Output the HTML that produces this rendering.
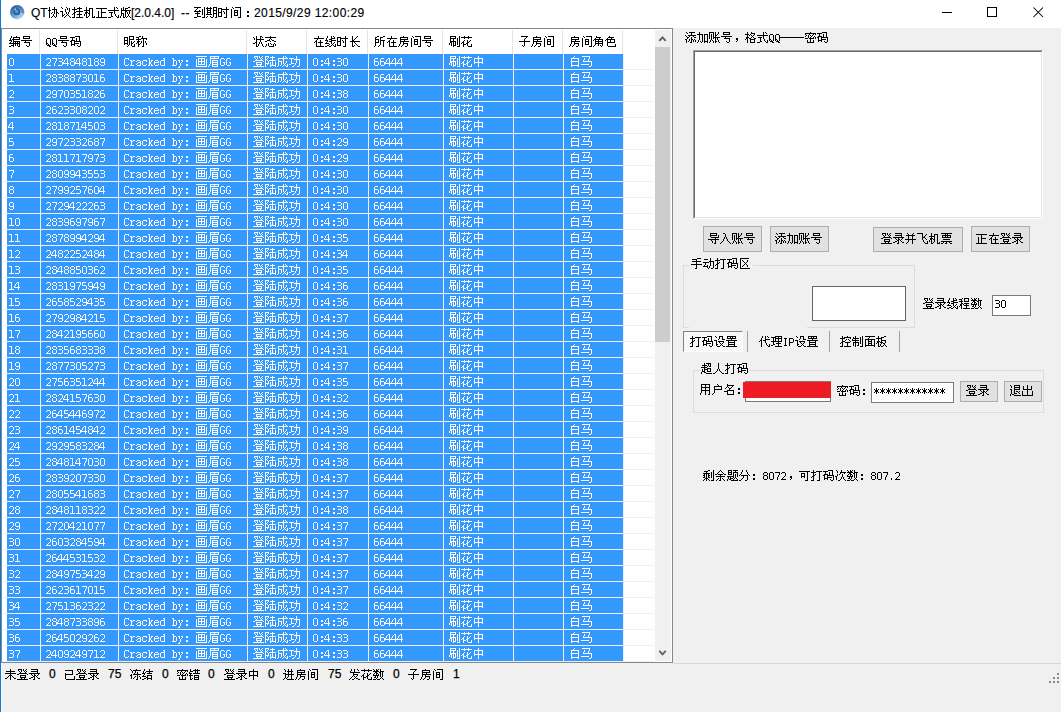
<!DOCTYPE html><html><head><meta charset="utf-8"><style>
*{margin:0;padding:0;box-sizing:border-box}
html,body{width:1061px;height:712px;overflow:hidden;background:#f0f0f0}
body{position:relative;font-family:"Liberation Sans",sans-serif;font-size:12px;color:#000}
div,span,svg{position:absolute;display:block}
span{white-space:nowrap;line-height:14px}
</style></head><body>
<div style="left:0;top:0;width:1061px;height:28px;background:#fff"></div>
<div style="left:0;top:0;width:1px;height:712px;background:#0a7ad6"></div>
<div style="left:1px;top:28px;width:1px;height:684px;background:#fdf8f2"></div>
<svg style="left:10px;top:5px" width="15" height="15" viewBox="0 0 15 15"><defs><linearGradient id="ig" x1="0.2" y1="0.1" x2="0.8" y2="0.95"><stop offset="0" stop-color="#2a5fa6"/><stop offset="0.55" stop-color="#6b9fd0"/><stop offset="1" stop-color="#cfe0f0"/></linearGradient><radialGradient id="ip" cx="0.45" cy="0.4" r="0.6"><stop offset="0" stop-color="#5ab4ee"/><stop offset="1" stop-color="#0d5ea6"/></radialGradient></defs><circle cx="7.2" cy="7.2" r="7.2" fill="url(#ig)"/><path d="M7.2 2.5A4.7 4.7 0 0 1 12 7.5L14 9A7 7 0 0 0 7.5 0.5Z" fill="#3a70b8" opacity="0.6"/><circle cx="6.8" cy="6.8" r="2.9" fill="url(#ip)" stroke="#15365e" stroke-width="0.6"/><path d="M4.2 5.2A3 3 0 0 1 6 3.9" stroke="#fff" stroke-width="0.9" fill="none"/></svg>
<span style="left:31px;top:5px;line-height:16px;-webkit-text-stroke:0.15px #000">QT</span>
<span style="left:131px;top:5px;line-height:16px;-webkit-text-stroke:0.15px #000">[2.0.4.0]</span>
<span style="left:181px;top:5px;line-height:16px;-webkit-text-stroke:0.15px #000;letter-spacing:0.6px">--</span>
<span style="left:254px;top:5px;line-height:16px;-webkit-text-stroke:0.15px #000;letter-spacing:0.4px">2015/9/29 12:00:29</span>
<div style="left:942px;top:12px;width:10px;height:1px;background:#000"></div>
<div style="left:987px;top:7px;width:10px;height:10px;border:1px solid #000"></div>
<svg style="left:1033px;top:7px" width="11" height="11" viewBox="0 0 11 11"><path d="M0.5 0.5L10 10M10 0.5L0.5 10" stroke="#000" stroke-width="1.05"/></svg>
<div style="left:1px;top:28px;width:672px;height:635px;background:#fff;border:1px solid #828790"></div>
<div style="left:39px;top:30px;width:1px;height:24px;background:#e5e5e5"></div>
<div style="left:117px;top:30px;width:1px;height:24px;background:#e5e5e5"></div>
<div style="left:246px;top:30px;width:1px;height:24px;background:#e5e5e5"></div>
<div style="left:306px;top:30px;width:1px;height:24px;background:#e5e5e5"></div>
<div style="left:367px;top:30px;width:1px;height:24px;background:#e5e5e5"></div>
<div style="left:442px;top:30px;width:1px;height:24px;background:#e5e5e5"></div>
<div style="left:512px;top:30px;width:1px;height:24px;background:#e5e5e5"></div>
<div style="left:562px;top:30px;width:1px;height:24px;background:#e5e5e5"></div>
<div style="left:622px;top:30px;width:1px;height:24px;background:#e5e5e5"></div>
<div style="left:7px;top:54px;width:616px;height:607px;background:#3399ff"></div>
<div style="left:3px;top:54px;width:651px;height:608px;background:repeating-linear-gradient(to bottom,transparent 0,transparent 15px,#f0f0f0 15px,#f0f0f0 16px)"></div>
<div style="left:40px;top:54px;width:1px;height:608px;background:#f0f0f0"></div>
<div style="left:118px;top:54px;width:1px;height:608px;background:#f0f0f0"></div>
<div style="left:247px;top:54px;width:1px;height:608px;background:#f0f0f0"></div>
<div style="left:307px;top:54px;width:1px;height:608px;background:#f0f0f0"></div>
<div style="left:368px;top:54px;width:1px;height:608px;background:#f0f0f0"></div>
<div style="left:443px;top:54px;width:1px;height:608px;background:#f0f0f0"></div>
<div style="left:513px;top:54px;width:1px;height:608px;background:#f0f0f0"></div>
<div style="left:563px;top:54px;width:1px;height:608px;background:#f0f0f0"></div>
<div style="left:623px;top:54px;width:1px;height:608px;background:#f0f0f0"></div>
<div style="left:655px;top:30px;width:16px;height:631px;background:#f0f0f0"></div>
<div style="left:655px;top:47px;width:15px;height:295px;background:#cdcdcd"></div>
<svg style="left:658px;top:35px" width="10" height="8" viewBox="0 0 10 8"><path d="M1.3 5.8L4.5 2.4L7.7 5.8" fill="none" stroke="#606060" stroke-width="1.9"/></svg>
<svg style="left:658px;top:648px" width="10" height="8" viewBox="0 0 10 8"><path d="M1.3 2.9L4.5 6.3L7.7 2.9" fill="none" stroke="#606060" stroke-width="1.9"/></svg>
<div style="left:673px;top:663px;width:388px;height:1px;background:#d7d7d7"></div>
<span style="left:49px;top:667px;-webkit-text-stroke:0.25px #000">0</span>
<span style="left:108px;top:667px;-webkit-text-stroke:0.25px #000">75</span>
<span style="left:162px;top:667px;-webkit-text-stroke:0.25px #000">0</span>
<span style="left:208px;top:667px;-webkit-text-stroke:0.25px #000">0</span>
<span style="left:268px;top:667px;-webkit-text-stroke:0.25px #000">0</span>
<span style="left:328px;top:667px;-webkit-text-stroke:0.25px #000">75</span>
<span style="left:393px;top:667px;-webkit-text-stroke:0.25px #000">0</span>
<span style="left:453px;top:667px;-webkit-text-stroke:0.25px #000">1</span>
<div style="left:1057px;top:673px;width:2px;height:2px;background:#8a8a8a"></div>
<div style="left:1053px;top:677px;width:2px;height:2px;background:#8a8a8a"></div>
<div style="left:1057px;top:677px;width:2px;height:2px;background:#8a8a8a"></div>
<div style="left:1049px;top:681px;width:2px;height:2px;background:#8a8a8a"></div>
<div style="left:1053px;top:681px;width:2px;height:2px;background:#8a8a8a"></div>
<div style="left:1057px;top:681px;width:2px;height:2px;background:#8a8a8a"></div>
<div style="left:693px;top:50px;width:350px;height:169px;background:#fff;border-style:solid;border-width:1px;border-color:#a0a0a0 #fff #fff #a0a0a0"></div>
<div style="left:694px;top:51px;width:348px;height:167px;border-style:solid;border-width:1px;border-color:#696969 #e3e3e3 #e3e3e3 #696969"></div>
<div style="left:703px;top:226px;width:59px;height:26px;background:#e1e1e1;border:1px solid #adadad"></div>
<div style="left:770px;top:226px;width:59px;height:26px;background:#e1e1e1;border:1px solid #adadad"></div>
<div style="left:873px;top:227px;width:90px;height:25px;background:#e1e1e1;border:1px solid #adadad"></div>
<div style="left:971px;top:226px;width:59px;height:26px;background:#e1e1e1;border:1px solid #adadad"></div>
<div style="left:683px;top:265px;width:232px;height:63px;border:1px solid #dcdcdc"></div>
<div style="left:689px;top:327px;width:118px;height:1px;background:#f0f0f0"></div>
<div style="left:689px;top:258px;width:64px;height:12px;background:#f0f0f0"></div>
<div style="left:812px;top:286px;width:94px;height:35px;background:#fff;border:1px solid #646464"></div>
<div style="left:992px;top:295px;width:39px;height:21px;background:#fff;border:1px solid #7a7a7a"></div>
<div style="left:683px;top:331px;width:60px;height:21px;border-style:solid;border-width:1px;border-color:#808080 #fff #fff #808080;background:#f7f7f7"></div>
<div style="left:747px;top:331px;width:1px;height:21px;background:#a0a0a0"></div>
<div style="left:829px;top:331px;width:1px;height:21px;background:#a0a0a0"></div>
<div style="left:899px;top:331px;width:1px;height:21px;background:#a0a0a0"></div>
<div style="left:693px;top:370px;width:351px;height:43px;border:1px solid #dcdcdc"></div>
<div style="left:700px;top:363px;width:50px;height:12px;background:#f0f0f0"></div>
<div style="left:745px;top:381px;width:86px;height:21px;background:#fff;border:1px solid #7a7a7a"></div>
<div style="left:743px;top:382px;width:88px;height:16px;background:#ed1c24"></div>
<div style="left:871px;top:382px;width:83px;height:21px;background:#fff;border:1px solid #7a7a7a"></div>
<div style="left:960px;top:381px;width:38px;height:21px;background:#e1e1e1;border:1px solid #adadad"></div>
<div style="left:1004px;top:381px;width:38px;height:21px;background:#e1e1e1;border:1px solid #adadad"></div>
<svg style="position:absolute;left:0;top:0" width="1061" height="712" viewBox="0 0 1061 712" shape-rendering="crispEdges"><defs><path id="g0" d="M1 -10h1v1h-1zM6 -10h1v1h-1zM1 -9h1v1h-1zM6 -9h1v1h-1zM1 -8h1v1h-1zM4 -8h5v1h-5zM0 -7h3v1h-3zM6 -7h1v1h-1zM8 -7h1v1h-1zM1 -6h1v1h-1zM6 -6h1v1h-1zM8 -6h1v1h-1zM1 -5h1v1h-1zM4 -5h1v1h-1zM6 -5h1v1h-1zM8 -5h2v1h-2zM1 -4h1v1h-1zM3 -4h1v1h-1zM6 -4h1v1h-1zM8 -4h1v1h-1zM10 -4h1v1h-1zM1 -3h1v1h-1zM5 -3h1v1h-1zM8 -3h1v1h-1zM1 -2h1v1h-1zM5 -2h1v1h-1zM8 -2h1v1h-1zM1 -1h1v1h-1zM4 -1h1v1h-1zM6 -1h1v1h-1zM8 -1h1v1h-1zM1 0h1v1h-1zM3 0h1v1h-1zM7 0h1v1h-1z"/><path id="g1" d="M1 -10h1v1h-1zM6 -10h1v1h-1zM2 -9h1v1h-1zM7 -9h1v1h-1zM9 -9h1v1h-1zM5 -8h1v1h-1zM7 -8h1v1h-1zM9 -8h1v1h-1zM5 -7h1v1h-1zM9 -7h1v1h-1zM0 -6h3v1h-3zM5 -6h1v1h-1zM9 -6h1v1h-1zM2 -5h1v1h-1zM6 -5h1v1h-1zM8 -5h1v1h-1zM2 -4h1v1h-1zM6 -4h1v1h-1zM8 -4h1v1h-1zM2 -3h1v1h-1zM4 -3h1v1h-1zM7 -3h1v1h-1zM2 -2h2v1h-2zM6 -2h1v1h-1zM8 -2h1v1h-1zM2 -1h1v1h-1zM5 -1h1v1h-1zM9 -1h1v1h-1zM4 0h1v1h-1zM10 0h1v1h-1z"/><path id="g2" d="M2 -10h1v1h-1zM7 -10h1v1h-1zM2 -9h1v1h-1zM5 -9h5v1h-5zM0 -8h5v1h-5zM7 -8h1v1h-1zM2 -7h1v1h-1zM7 -7h1v1h-1zM2 -6h1v1h-1zM4 -6h7v1h-7zM2 -5h2v1h-2zM7 -5h1v1h-1zM1 -4h2v1h-2zM7 -4h1v1h-1zM0 -3h1v1h-1zM2 -3h1v1h-1zM5 -3h5v1h-5zM2 -2h1v1h-1zM7 -2h1v1h-1zM2 -1h1v1h-1zM7 -1h1v1h-1zM0 0h3v1h-3zM4 0h7v1h-7z"/><path id="g3" d="M2 -10h1v1h-1zM2 -9h1v1h-1zM5 -9h4v1h-4zM2 -8h1v1h-1zM5 -8h1v1h-1zM8 -8h1v1h-1zM0 -7h6v1h-6zM8 -7h1v1h-1zM2 -6h1v1h-1zM5 -6h1v1h-1zM8 -6h1v1h-1zM1 -5h3v1h-3zM5 -5h1v1h-1zM8 -5h1v1h-1zM1 -4h2v1h-2zM4 -4h2v1h-2zM8 -4h1v1h-1zM0 -3h1v1h-1zM2 -3h1v1h-1zM5 -3h1v1h-1zM8 -3h1v1h-1zM0 -2h1v1h-1zM2 -2h1v1h-1zM5 -2h1v1h-1zM8 -2h1v1h-1zM2 -1h1v1h-1zM4 -1h1v1h-1zM8 -1h1v1h-1zM10 -1h1v1h-1zM2 0h2v1h-2zM8 0h3v1h-3z"/><path id="g4" d="M0 -9h11v1h-11zM5 -8h1v1h-1zM5 -7h1v1h-1zM2 -6h1v1h-1zM5 -6h1v1h-1zM2 -5h1v1h-1zM5 -5h5v1h-5zM2 -4h1v1h-1zM5 -4h1v1h-1zM2 -3h1v1h-1zM5 -3h1v1h-1zM2 -2h1v1h-1zM5 -2h1v1h-1zM2 -1h1v1h-1zM5 -1h1v1h-1zM0 0h11v1h-11z"/><path id="g5" d="M6 -10h1v1h-1zM8 -10h1v1h-1zM6 -9h1v1h-1zM9 -9h1v1h-1zM6 -8h1v1h-1zM0 -7h11v1h-11zM6 -6h1v1h-1zM1 -5h4v1h-4zM6 -5h1v1h-1zM3 -4h1v1h-1zM6 -4h1v1h-1zM3 -3h1v1h-1zM7 -3h1v1h-1zM3 -2h1v1h-1zM7 -2h1v1h-1zM10 -2h1v1h-1zM3 -1h2v1h-2zM8 -1h1v1h-1zM10 -1h1v1h-1zM0 0h3v1h-3zM9 0h2v1h-2z"/><path id="g6" d="M3 -10h1v1h-1zM8 -10h2v1h-2zM1 -9h1v1h-1zM3 -9h1v1h-1zM5 -9h3v1h-3zM1 -8h1v1h-1zM3 -8h1v1h-1zM5 -8h1v1h-1zM1 -7h10v1h-10zM1 -6h1v1h-1zM5 -6h2v1h-2zM9 -6h1v1h-1zM1 -5h1v1h-1zM5 -5h1v1h-1zM7 -5h1v1h-1zM9 -5h1v1h-1zM1 -4h3v1h-3zM5 -4h1v1h-1zM7 -4h1v1h-1zM9 -4h1v1h-1zM1 -3h1v1h-1zM3 -3h1v1h-1zM5 -3h1v1h-1zM8 -3h1v1h-1zM1 -2h1v1h-1zM3 -2h1v1h-1zM5 -2h1v1h-1zM8 -2h1v1h-1zM0 -1h1v1h-1zM3 -1h1v1h-1zM5 -1h1v1h-1zM7 -1h1v1h-1zM9 -1h1v1h-1zM0 0h1v1h-1zM3 0h2v1h-2zM6 0h1v1h-1zM10 0h1v1h-1z"/><path id="g7" d="M0 -10h7v1h-7zM10 -10h1v1h-1zM3 -9h1v1h-1zM10 -9h1v1h-1zM2 -8h1v1h-1zM8 -8h1v1h-1zM10 -8h1v1h-1zM1 -7h1v1h-1zM5 -7h1v1h-1zM8 -7h1v1h-1zM10 -7h1v1h-1zM0 -6h7v1h-7zM8 -6h1v1h-1zM10 -6h1v1h-1zM3 -5h1v1h-1zM8 -5h1v1h-1zM10 -5h1v1h-1zM1 -4h5v1h-5zM8 -4h1v1h-1zM10 -4h1v1h-1zM3 -3h1v1h-1zM8 -3h1v1h-1zM10 -3h1v1h-1zM3 -2h1v1h-1zM10 -2h1v1h-1zM3 -1h4v1h-4zM10 -1h1v1h-1zM0 0h3v1h-3zM8 0h3v1h-3z"/><path id="g8" d="M1 -10h1v1h-1zM4 -10h1v1h-1zM7 -10h4v1h-4zM0 -9h6v1h-6zM7 -9h1v1h-1zM10 -9h1v1h-1zM1 -8h1v1h-1zM4 -8h1v1h-1zM7 -8h1v1h-1zM10 -8h1v1h-1zM1 -7h4v1h-4zM7 -7h4v1h-4zM1 -6h1v1h-1zM4 -6h1v1h-1zM7 -6h1v1h-1zM10 -6h1v1h-1zM1 -5h4v1h-4zM7 -5h1v1h-1zM10 -5h1v1h-1zM1 -4h1v1h-1zM4 -4h1v1h-1zM7 -4h4v1h-4zM0 -3h6v1h-6zM7 -3h1v1h-1zM10 -3h1v1h-1zM7 -2h1v1h-1zM10 -2h1v1h-1zM1 -1h1v1h-1zM4 -1h1v1h-1zM7 -1h1v1h-1zM10 -1h1v1h-1zM0 0h1v1h-1zM5 0h2v1h-2zM9 0h2v1h-2z"/><path id="g9" d="M8 -10h1v1h-1zM0 -9h4v1h-4zM8 -9h1v1h-1zM0 -8h1v1h-1zM3 -8h8v1h-8zM0 -7h1v1h-1zM3 -7h1v1h-1zM8 -7h1v1h-1zM0 -6h1v1h-1zM3 -6h1v1h-1zM5 -6h1v1h-1zM8 -6h1v1h-1zM0 -5h4v1h-4zM6 -5h1v1h-1zM8 -5h1v1h-1zM0 -4h1v1h-1zM3 -4h1v1h-1zM6 -4h1v1h-1zM8 -4h1v1h-1zM0 -3h1v1h-1zM3 -3h1v1h-1zM8 -3h1v1h-1zM0 -2h1v1h-1zM3 -2h1v1h-1zM8 -2h1v1h-1zM0 -1h4v1h-4zM8 -1h1v1h-1zM6 0h3v1h-3z"/><path id="g10" d="M2 -10h1v1h-1zM5 -10h6v1h-6zM3 -9h1v1h-1zM10 -9h1v1h-1zM1 -8h1v1h-1zM10 -8h1v1h-1zM1 -7h1v1h-1zM4 -7h4v1h-4zM10 -7h1v1h-1zM1 -6h1v1h-1zM4 -6h1v1h-1zM7 -6h1v1h-1zM10 -6h1v1h-1zM1 -5h1v1h-1zM4 -5h4v1h-4zM10 -5h1v1h-1zM1 -4h1v1h-1zM4 -4h1v1h-1zM7 -4h1v1h-1zM10 -4h1v1h-1zM1 -3h1v1h-1zM4 -3h1v1h-1zM7 -3h1v1h-1zM10 -3h1v1h-1zM1 -2h1v1h-1zM4 -2h4v1h-4zM10 -2h1v1h-1zM1 -1h1v1h-1zM10 -1h1v1h-1zM1 0h1v1h-1zM8 0h3v1h-3z"/><path id="g11" d="M2 -6h2v1h-2zM2 -5h2v1h-2zM2 -2h2v1h-2zM2 -1h2v1h-2z"/><path id="g12" d="M3 -10h1v1h-1zM8 -10h1v1h-1zM3 -9h1v1h-1zM5 -9h7v1h-7zM2 -8h1v1h-1zM5 -8h1v1h-1zM11 -8h1v1h-1zM2 -7h1v1h-1zM4 -7h8v1h-8zM1 -6h3v1h-3zM5 -6h1v1h-1zM3 -5h1v1h-1zM5 -5h7v1h-7zM2 -4h1v1h-1zM5 -4h1v1h-1zM7 -4h1v1h-1zM9 -4h1v1h-1zM11 -4h1v1h-1zM1 -3h11v1h-11zM5 -2h1v1h-1zM7 -2h1v1h-1zM9 -2h1v1h-1zM11 -2h1v1h-1zM3 -1h3v1h-3zM7 -1h1v1h-1zM9 -1h1v1h-1zM11 -1h1v1h-1zM1 0h2v1h-2zM5 0h1v1h-1zM10 0h2v1h-2z"/><path id="g13" d="M3 -10h7v1h-7zM3 -9h1v1h-1zM9 -9h1v1h-1zM3 -8h7v1h-7zM1 -6h11v1h-11zM5 -5h1v1h-1zM4 -4h6v1h-6zM9 -3h1v1h-1zM9 -2h1v1h-1zM6 -1h1v1h-1zM9 -1h1v1h-1zM7 0h2v1h-2z"/><path id="g14" d="M2 -8h3v1h-3zM1 -7h1v1h-1zM5 -7h1v1h-1zM1 -6h1v1h-1zM5 -6h1v1h-1zM1 -5h1v1h-1zM5 -5h1v1h-1zM1 -4h1v1h-1zM5 -4h1v1h-1zM1 -3h2v1h-2zM5 -3h1v1h-1zM1 -2h1v1h-1zM3 -2h1v1h-1zM5 -2h1v1h-1zM2 -1h3v1h-3zM4 0h2v1h-2z"/><path id="g15" d="M6 -10h5v1h-5zM1 -9h5v1h-5zM10 -9h1v1h-1zM3 -8h1v1h-1zM7 -8h1v1h-1zM10 -8h1v1h-1zM3 -7h1v1h-1zM7 -7h1v1h-1zM10 -7h1v1h-1zM2 -6h4v1h-4zM7 -6h1v1h-1zM10 -6h1v1h-1zM1 -5h2v1h-2zM5 -5h7v1h-7zM2 -4h1v1h-1zM5 -4h1v1h-1zM11 -4h1v1h-1zM2 -3h1v1h-1zM5 -3h5v1h-5zM11 -3h1v1h-1zM2 -2h4v1h-4zM11 -2h1v1h-1zM2 -1h1v1h-1zM5 -1h1v1h-1zM8 -1h1v1h-1zM11 -1h1v1h-1zM9 0h2v1h-2z"/><path id="g16" d="M6 -10h5v1h-5zM1 -9h4v1h-4zM6 -9h1v1h-1zM10 -9h1v1h-1zM1 -8h1v1h-1zM4 -8h1v1h-1zM6 -8h1v1h-1zM10 -8h1v1h-1zM1 -7h1v1h-1zM4 -7h1v1h-1zM6 -7h5v1h-5zM1 -6h4v1h-4zM6 -6h1v1h-1zM1 -5h1v1h-1zM4 -5h1v1h-1zM6 -5h1v1h-1zM8 -5h1v1h-1zM11 -5h1v1h-1zM1 -4h1v1h-1zM4 -4h1v1h-1zM6 -4h1v1h-1zM8 -4h1v1h-1zM10 -4h1v1h-1zM1 -3h4v1h-4zM6 -3h1v1h-1zM8 -3h2v1h-2zM1 -2h1v1h-1zM4 -2h1v1h-1zM6 -2h1v1h-1zM8 -2h1v1h-1zM11 -2h1v1h-1zM5 -1h1v1h-1zM8 -1h1v1h-1zM11 -1h1v1h-1zM4 0h1v1h-1zM9 0h3v1h-3z"/><path id="g17" d="M4 -10h2v1h-2zM7 -10h1v1h-1zM1 -9h3v1h-3zM7 -9h1v1h-1zM3 -8h1v1h-1zM6 -8h6v1h-6zM1 -7h5v1h-5zM8 -7h1v1h-1zM11 -7h1v1h-1zM3 -6h1v1h-1zM8 -6h1v1h-1zM2 -5h3v1h-3zM6 -5h1v1h-1zM8 -5h1v1h-1zM10 -5h1v1h-1zM2 -4h2v1h-2zM6 -4h1v1h-1zM8 -4h1v1h-1zM10 -4h1v1h-1zM1 -3h1v1h-1zM3 -3h1v1h-1zM5 -3h1v1h-1zM8 -3h1v1h-1zM11 -3h1v1h-1zM3 -2h2v1h-2zM8 -2h1v1h-1zM11 -2h1v1h-1zM3 -1h1v1h-1zM8 -1h1v1h-1zM3 0h1v1h-1zM7 0h2v1h-2z"/><path id="g18" d="M4 -10h1v1h-1zM8 -10h2v1h-2zM1 -9h1v1h-1zM4 -9h1v1h-1zM8 -9h1v1h-1zM10 -9h1v1h-1zM2 -8h1v1h-1zM4 -8h1v1h-1zM8 -8h1v1h-1zM2 -7h1v1h-1zM4 -7h8v1h-8zM4 -6h1v1h-1zM8 -6h1v1h-1zM4 -5h1v1h-1zM8 -5h1v1h-1zM3 -4h2v1h-2zM7 -4h1v1h-1zM9 -4h1v1h-1zM1 -3h2v1h-2zM4 -3h1v1h-1zM7 -3h1v1h-1zM9 -3h1v1h-1zM4 -2h1v1h-1zM6 -2h1v1h-1zM10 -2h1v1h-1zM4 -1h1v1h-1zM6 -1h1v1h-1zM10 -1h1v1h-1zM4 0h2v1h-2zM11 0h1v1h-1z"/><path id="g19" d="M6 -10h1v1h-1zM1 -9h11v1h-11zM6 -8h1v1h-1zM5 -7h1v1h-1zM7 -7h1v1h-1zM3 -6h3v1h-3zM8 -6h2v1h-2zM1 -5h2v1h-2zM6 -5h1v1h-1zM10 -5h2v1h-2zM4 -3h1v1h-1zM6 -3h1v1h-1zM10 -3h1v1h-1zM2 -2h1v1h-1zM4 -2h1v1h-1zM7 -2h1v1h-1zM9 -2h1v1h-1zM11 -2h1v1h-1zM2 -1h1v1h-1zM4 -1h1v1h-1zM9 -1h1v1h-1zM11 -1h1v1h-1zM1 0h1v1h-1zM5 0h5v1h-5z"/><path id="g20" d="M6 -10h1v1h-1zM6 -9h1v1h-1zM2 -8h10v1h-10zM5 -7h1v1h-1zM4 -6h1v1h-1zM8 -6h1v1h-1zM3 -5h2v1h-2zM8 -5h1v1h-1zM2 -4h1v1h-1zM4 -4h1v1h-1zM6 -4h5v1h-5zM4 -3h1v1h-1zM8 -3h1v1h-1zM4 -2h1v1h-1zM8 -2h1v1h-1zM4 -1h1v1h-1zM8 -1h1v1h-1zM4 0h8v1h-8z"/><path id="g21" d="M3 -10h1v1h-1zM7 -10h1v1h-1zM9 -10h1v1h-1zM3 -9h1v1h-1zM7 -9h1v1h-1zM10 -9h1v1h-1zM2 -8h1v1h-1zM7 -8h4v1h-4zM2 -7h1v1h-1zM5 -7h3v1h-3zM1 -6h3v1h-3zM7 -6h5v1h-5zM3 -5h1v1h-1zM5 -5h3v1h-3zM2 -4h1v1h-1zM7 -4h1v1h-1zM10 -4h1v1h-1zM1 -3h4v1h-4zM7 -3h1v1h-1zM9 -3h1v1h-1zM5 -2h1v1h-1zM8 -2h1v1h-1zM11 -2h1v1h-1zM3 -1h2v1h-2zM7 -1h1v1h-1zM9 -1h1v1h-1zM11 -1h1v1h-1zM1 0h2v1h-2zM5 0h2v1h-2zM10 0h2v1h-2z"/><path id="g22" d="M9 -10h1v1h-1zM1 -9h4v1h-4zM9 -9h1v1h-1zM1 -8h1v1h-1zM4 -8h8v1h-8zM1 -7h1v1h-1zM4 -7h1v1h-1zM9 -7h1v1h-1zM1 -6h1v1h-1zM4 -6h1v1h-1zM6 -6h1v1h-1zM9 -6h1v1h-1zM1 -5h4v1h-4zM7 -5h1v1h-1zM9 -5h1v1h-1zM1 -4h1v1h-1zM4 -4h1v1h-1zM7 -4h1v1h-1zM9 -4h1v1h-1zM1 -3h1v1h-1zM4 -3h1v1h-1zM9 -3h1v1h-1zM1 -2h1v1h-1zM4 -2h1v1h-1zM9 -2h1v1h-1zM1 -1h4v1h-4zM9 -1h1v1h-1zM7 0h3v1h-3z"/><path id="g23" d="M4 -10h1v1h-1zM9 -10h1v1h-1zM4 -9h1v1h-1zM8 -9h1v1h-1zM4 -8h1v1h-1zM7 -8h1v1h-1zM4 -7h1v1h-1zM6 -7h1v1h-1zM4 -6h2v1h-2zM2 -5h10v1h-10zM4 -4h1v1h-1zM6 -4h1v1h-1zM4 -3h1v1h-1zM7 -3h1v1h-1zM4 -2h1v1h-1zM8 -2h1v1h-1zM4 -1h1v1h-1zM6 -1h1v1h-1zM9 -1h1v1h-1zM4 0h2v1h-2zM10 0h2v1h-2z"/><path id="g24" d="M4 -10h2v1h-2zM10 -10h2v1h-2zM2 -9h2v1h-2zM7 -9h3v1h-3zM2 -8h1v1h-1zM7 -8h1v1h-1zM2 -7h4v1h-4zM7 -7h1v1h-1zM2 -6h1v1h-1zM5 -6h1v1h-1zM7 -6h5v1h-5zM2 -5h1v1h-1zM5 -5h1v1h-1zM7 -5h1v1h-1zM10 -5h1v1h-1zM2 -4h4v1h-4zM7 -4h1v1h-1zM10 -4h1v1h-1zM2 -3h1v1h-1zM7 -3h1v1h-1zM10 -3h1v1h-1zM2 -2h1v1h-1zM7 -2h1v1h-1zM10 -2h1v1h-1zM2 -1h1v1h-1zM6 -1h1v1h-1zM10 -1h1v1h-1zM1 0h1v1h-1zM5 0h1v1h-1zM10 0h1v1h-1z"/><path id="g25" d="M6 -10h1v1h-1zM3 -9h8v1h-8zM3 -8h1v1h-1zM10 -8h1v1h-1zM3 -7h8v1h-8zM3 -6h1v1h-1zM7 -6h1v1h-1zM3 -5h9v1h-9zM3 -4h1v1h-1zM6 -4h1v1h-1zM3 -3h1v1h-1zM6 -3h5v1h-5zM2 -2h1v1h-1zM6 -2h1v1h-1zM10 -2h1v1h-1zM2 -1h1v1h-1zM5 -1h1v1h-1zM10 -1h1v1h-1zM1 0h1v1h-1zM4 0h1v1h-1zM8 0h2v1h-2z"/><path id="g26" d="M3 -10h1v1h-1zM6 -10h6v1h-6zM4 -9h1v1h-1zM11 -9h1v1h-1zM2 -8h1v1h-1zM11 -8h1v1h-1zM2 -7h1v1h-1zM5 -7h4v1h-4zM11 -7h1v1h-1zM2 -6h1v1h-1zM5 -6h1v1h-1zM8 -6h1v1h-1zM11 -6h1v1h-1zM2 -5h1v1h-1zM5 -5h4v1h-4zM11 -5h1v1h-1zM2 -4h1v1h-1zM5 -4h1v1h-1zM8 -4h1v1h-1zM11 -4h1v1h-1zM2 -3h1v1h-1zM5 -3h1v1h-1zM8 -3h1v1h-1zM11 -3h1v1h-1zM2 -2h1v1h-1zM5 -2h4v1h-4zM11 -2h1v1h-1zM2 -1h1v1h-1zM11 -1h1v1h-1zM2 0h1v1h-1zM9 0h3v1h-3z"/><path id="g27" d="M2 -10h6v1h-6zM11 -10h1v1h-1zM2 -9h1v1h-1zM7 -9h1v1h-1zM11 -9h1v1h-1zM2 -8h6v1h-6zM9 -8h1v1h-1zM11 -8h1v1h-1zM2 -7h1v1h-1zM5 -7h1v1h-1zM9 -7h1v1h-1zM11 -7h1v1h-1zM2 -6h1v1h-1zM5 -6h1v1h-1zM9 -6h1v1h-1zM11 -6h1v1h-1zM2 -5h6v1h-6zM9 -5h1v1h-1zM11 -5h1v1h-1zM2 -4h2v1h-2zM5 -4h1v1h-1zM7 -4h1v1h-1zM9 -4h1v1h-1zM11 -4h1v1h-1zM1 -3h1v1h-1zM3 -3h1v1h-1zM5 -3h1v1h-1zM7 -3h1v1h-1zM9 -3h1v1h-1zM11 -3h1v1h-1zM1 -2h1v1h-1zM3 -2h1v1h-1zM5 -2h1v1h-1zM7 -2h1v1h-1zM9 -2h1v1h-1zM11 -2h1v1h-1zM3 -1h1v1h-1zM5 -1h3v1h-3zM11 -1h1v1h-1zM5 0h1v1h-1zM9 0h3v1h-3z"/><path id="g28" d="M4 -10h1v1h-1zM8 -10h1v1h-1zM1 -9h11v1h-11zM4 -8h1v1h-1zM8 -8h1v1h-1zM4 -6h1v1h-1zM7 -6h1v1h-1zM10 -6h1v1h-1zM3 -5h1v1h-1zM7 -5h1v1h-1zM9 -5h1v1h-1zM2 -4h2v1h-2zM7 -4h2v1h-2zM1 -3h1v1h-1zM3 -3h1v1h-1zM6 -3h2v1h-2zM3 -2h3v1h-3zM7 -2h1v1h-1zM11 -2h1v1h-1zM3 -1h1v1h-1zM7 -1h1v1h-1zM11 -1h1v1h-1zM3 0h1v1h-1zM8 0h4v1h-4z"/><path id="g29" d="M3 -10h7v1h-7zM8 -9h1v1h-1zM7 -8h1v1h-1zM6 -7h1v1h-1zM6 -6h1v1h-1zM1 -5h11v1h-11zM6 -4h1v1h-1zM6 -3h1v1h-1zM6 -2h1v1h-1zM4 -1h1v1h-1zM6 -1h1v1h-1zM5 0h1v1h-1z"/><path id="g30" d="M4 -10h1v1h-1zM4 -9h5v1h-5zM3 -8h1v1h-1zM7 -8h1v1h-1zM2 -7h9v1h-9zM1 -6h1v1h-1zM3 -6h1v1h-1zM6 -6h1v1h-1zM10 -6h1v1h-1zM3 -5h8v1h-8zM3 -4h1v1h-1zM6 -4h1v1h-1zM10 -4h1v1h-1zM3 -3h8v1h-8zM3 -2h1v1h-1zM6 -2h1v1h-1zM10 -2h1v1h-1zM2 -1h1v1h-1zM6 -1h1v1h-1zM8 -1h1v1h-1zM10 -1h1v1h-1zM1 0h1v1h-1zM9 0h1v1h-1z"/><path id="g31" d="M5 -10h1v1h-1zM4 -9h6v1h-6zM3 -8h1v1h-1zM7 -8h1v1h-1zM2 -7h9v1h-9zM1 -6h1v1h-1zM3 -6h1v1h-1zM6 -6h1v1h-1zM10 -6h1v1h-1zM3 -5h1v1h-1zM6 -5h1v1h-1zM10 -5h1v1h-1zM3 -4h8v1h-8zM3 -3h1v1h-1zM3 -2h1v1h-1zM11 -2h1v1h-1zM3 -1h1v1h-1zM11 -1h1v1h-1zM4 0h8v1h-8z"/><path id="g32" d="M2 -8h3v1h-3zM1 -7h1v1h-1zM5 -7h1v1h-1zM1 -6h1v1h-1zM5 -6h1v1h-1zM1 -5h1v1h-1zM5 -5h1v1h-1zM1 -4h1v1h-1zM5 -4h1v1h-1zM1 -3h1v1h-1zM5 -3h1v1h-1zM1 -2h1v1h-1zM5 -2h1v1h-1zM2 -1h3v1h-3z"/><path id="g33" d="M2 -8h3v1h-3zM1 -7h1v1h-1zM5 -7h1v1h-1zM5 -6h1v1h-1zM5 -5h1v1h-1zM4 -4h1v1h-1zM3 -3h1v1h-1zM2 -2h1v1h-1zM1 -1h5v1h-5z"/><path id="g34" d="M1 -8h5v1h-5zM5 -7h1v1h-1zM5 -6h1v1h-1zM4 -5h1v1h-1zM4 -4h1v1h-1zM3 -3h1v1h-1zM3 -2h1v1h-1zM3 -1h1v1h-1z"/><path id="g35" d="M1 -8h4v1h-4zM5 -7h1v1h-1zM5 -6h1v1h-1zM2 -5h3v1h-3zM5 -4h1v1h-1zM5 -3h1v1h-1zM5 -2h1v1h-1zM1 -1h4v1h-4z"/><path id="g36" d="M3 -8h2v1h-2zM2 -7h1v1h-1zM4 -7h1v1h-1zM1 -6h1v1h-1zM4 -6h1v1h-1zM1 -5h1v1h-1zM4 -5h1v1h-1zM0 -4h1v1h-1zM4 -4h1v1h-1zM0 -3h6v1h-6zM4 -2h1v1h-1zM4 -1h1v1h-1z"/><path id="g37" d="M2 -8h3v1h-3zM1 -7h1v1h-1zM5 -7h1v1h-1zM1 -6h1v1h-1zM5 -6h1v1h-1zM2 -5h3v1h-3zM1 -4h1v1h-1zM5 -4h1v1h-1zM1 -3h1v1h-1zM5 -3h1v1h-1zM1 -2h1v1h-1zM5 -2h1v1h-1zM2 -1h3v1h-3z"/><path id="g38" d="M1 -8h3v1h-3zM3 -7h1v1h-1zM3 -6h1v1h-1zM3 -5h1v1h-1zM3 -4h1v1h-1zM3 -3h1v1h-1zM3 -2h1v1h-1zM1 -1h5v1h-5z"/><path id="g39" d="M2 -8h3v1h-3zM1 -7h1v1h-1zM5 -7h1v1h-1zM1 -6h1v1h-1zM5 -6h1v1h-1zM1 -5h1v1h-1zM5 -5h1v1h-1zM2 -4h4v1h-4zM5 -3h1v1h-1zM1 -2h1v1h-1zM5 -2h1v1h-1zM2 -1h3v1h-3z"/><path id="g40" d="M2 -8h4v1h-4zM1 -7h1v1h-1zM5 -7h1v1h-1zM1 -6h1v1h-1zM1 -5h1v1h-1zM1 -4h1v1h-1zM1 -3h1v1h-1zM1 -2h1v1h-1zM5 -2h1v1h-1zM2 -1h3v1h-3z"/><path id="g41" d="M1 -6h2v1h-2zM4 -6h2v1h-2zM2 -5h2v1h-2zM2 -4h1v1h-1zM2 -3h1v1h-1zM2 -2h1v1h-1zM1 -1h4v1h-4z"/><path id="g42" d="M2 -6h3v1h-3zM1 -5h1v1h-1zM5 -5h1v1h-1zM3 -4h3v1h-3zM2 -3h1v1h-1zM5 -3h1v1h-1zM1 -2h1v1h-1zM5 -2h1v1h-1zM2 -1h4v1h-4z"/><path id="g43" d="M2 -6h4v1h-4zM1 -5h1v1h-1zM5 -5h1v1h-1zM1 -4h1v1h-1zM1 -3h1v1h-1zM1 -2h1v1h-1zM5 -2h1v1h-1zM2 -1h3v1h-3z"/><path id="g44" d="M1 -8h2v1h-2zM2 -7h1v1h-1zM2 -6h1v1h-1zM4 -6h2v1h-2zM2 -5h1v1h-1zM4 -5h1v1h-1zM2 -4h2v1h-2zM2 -3h2v1h-2zM2 -2h1v1h-1zM4 -2h1v1h-1zM1 -1h2v1h-2zM4 -1h2v1h-2z"/><path id="g45" d="M2 -6h3v1h-3zM1 -5h1v1h-1zM5 -5h1v1h-1zM1 -4h5v1h-5zM1 -3h1v1h-1zM1 -2h1v1h-1zM5 -2h1v1h-1zM2 -1h3v1h-3z"/><path id="g46" d="M4 -8h2v1h-2zM5 -7h1v1h-1zM2 -6h4v1h-4zM1 -5h1v1h-1zM5 -5h1v1h-1zM1 -4h1v1h-1zM5 -4h1v1h-1zM1 -3h1v1h-1zM5 -3h1v1h-1zM1 -2h1v1h-1zM5 -2h1v1h-1zM2 -1h4v1h-4z"/><path id="g47" d="M1 -8h2v1h-2zM2 -7h1v1h-1zM2 -6h3v1h-3zM2 -5h1v1h-1zM5 -5h1v1h-1zM2 -4h1v1h-1zM5 -4h1v1h-1zM2 -3h1v1h-1zM5 -3h1v1h-1zM2 -2h1v1h-1zM5 -2h1v1h-1zM1 -1h4v1h-4z"/><path id="g48" d="M1 -6h2v1h-2zM4 -6h2v1h-2zM2 -5h1v1h-1zM5 -5h1v1h-1zM2 -4h1v1h-1zM4 -4h1v1h-1zM3 -3h1v1h-1zM3 -2h1v1h-1zM3 -1h1v1h-1zM2 0h1v1h-1zM1 1h2v1h-2z"/><path id="g49" d="M3 -6h2v1h-2zM3 -5h2v1h-2zM3 -2h2v1h-2zM3 -1h2v1h-2z"/><path id="g50" d="M1 -10h11v1h-11zM3 -8h7v1h-7zM1 -7h1v1h-1zM3 -7h1v1h-1zM6 -7h1v1h-1zM9 -7h1v1h-1zM11 -7h1v1h-1zM1 -6h1v1h-1zM3 -6h1v1h-1zM6 -6h1v1h-1zM9 -6h1v1h-1zM11 -6h1v1h-1zM1 -5h1v1h-1zM3 -5h7v1h-7zM11 -5h1v1h-1zM1 -4h1v1h-1zM3 -4h1v1h-1zM6 -4h1v1h-1zM9 -4h1v1h-1zM11 -4h1v1h-1zM1 -3h1v1h-1zM3 -3h1v1h-1zM6 -3h1v1h-1zM9 -3h1v1h-1zM11 -3h1v1h-1zM1 -2h1v1h-1zM3 -2h7v1h-7zM11 -2h1v1h-1zM1 -1h1v1h-1zM11 -1h1v1h-1zM1 0h11v1h-11z"/><path id="g51" d="M3 -10h9v1h-9zM3 -9h1v1h-1zM7 -9h1v1h-1zM11 -9h1v1h-1zM3 -8h9v1h-9zM3 -7h1v1h-1zM3 -6h1v1h-1zM5 -6h6v1h-6zM3 -5h1v1h-1zM5 -5h1v1h-1zM10 -5h1v1h-1zM3 -4h1v1h-1zM5 -4h6v1h-6zM3 -3h1v1h-1zM5 -3h1v1h-1zM10 -3h1v1h-1zM2 -2h1v1h-1zM5 -2h6v1h-6zM2 -1h1v1h-1zM5 -1h1v1h-1zM10 -1h1v1h-1zM1 0h1v1h-1zM5 0h6v1h-6z"/><path id="g52" d="M2 -8h3v1h-3zM1 -7h1v1h-1zM5 -7h1v1h-1zM1 -6h1v1h-1zM1 -5h1v1h-1zM1 -4h1v1h-1zM4 -4h2v1h-2zM1 -3h1v1h-1zM5 -3h1v1h-1zM1 -2h1v1h-1zM5 -2h1v1h-1zM2 -1h3v1h-3z"/><path id="g53" d="M2 -10h4v1h-4zM7 -10h1v1h-1zM10 -10h1v1h-1zM2 -9h1v1h-1zM5 -9h1v1h-1zM7 -9h1v1h-1zM9 -9h1v1h-1zM3 -8h1v1h-1zM5 -8h1v1h-1zM8 -8h1v1h-1zM10 -8h1v1h-1zM4 -7h1v1h-1zM9 -7h1v1h-1zM3 -6h8v1h-8zM1 -5h2v1h-2zM11 -5h1v1h-1zM4 -4h6v1h-6zM4 -3h1v1h-1zM9 -3h1v1h-1zM4 -2h6v1h-6zM5 -1h1v1h-1zM8 -1h1v1h-1zM1 0h11v1h-11z"/><path id="g54" d="M1 -10h4v1h-4zM8 -10h1v1h-1zM1 -9h1v1h-1zM4 -9h1v1h-1zM6 -9h5v1h-5zM1 -8h1v1h-1zM3 -8h1v1h-1zM8 -8h1v1h-1zM1 -7h2v1h-2zM8 -7h1v1h-1zM1 -6h1v1h-1zM3 -6h1v1h-1zM5 -6h7v1h-7zM1 -5h1v1h-1zM4 -5h1v1h-1zM8 -5h1v1h-1zM1 -4h1v1h-1zM4 -4h1v1h-1zM6 -4h1v1h-1zM8 -4h1v1h-1zM11 -4h1v1h-1zM1 -3h4v1h-4zM6 -3h1v1h-1zM8 -3h1v1h-1zM11 -3h1v1h-1zM1 -2h1v1h-1zM3 -2h1v1h-1zM6 -2h1v1h-1zM8 -2h1v1h-1zM11 -2h1v1h-1zM1 -1h1v1h-1zM6 -1h6v1h-6zM1 0h1v1h-1zM6 0h1v1h-1zM11 0h1v1h-1z"/><path id="g55" d="M7 -10h1v1h-1zM9 -10h1v1h-1zM7 -9h1v1h-1zM10 -9h1v1h-1zM2 -8h10v1h-10zM2 -7h1v1h-1zM7 -7h1v1h-1zM2 -6h1v1h-1zM7 -6h1v1h-1zM2 -5h4v1h-4zM7 -5h1v1h-1zM10 -5h1v1h-1zM2 -4h1v1h-1zM5 -4h1v1h-1zM7 -4h1v1h-1zM10 -4h1v1h-1zM2 -3h1v1h-1zM5 -3h1v1h-1zM7 -3h1v1h-1zM9 -3h1v1h-1zM2 -2h1v1h-1zM5 -2h1v1h-1zM8 -2h1v1h-1zM11 -2h1v1h-1zM2 -1h1v1h-1zM4 -1h1v1h-1zM7 -1h1v1h-1zM9 -1h1v1h-1zM11 -1h1v1h-1zM1 0h1v1h-1zM6 0h1v1h-1zM10 0h2v1h-2z"/><path id="g56" d="M8 -10h1v1h-1zM8 -9h1v1h-1zM1 -8h5v1h-5zM8 -8h1v1h-1zM3 -7h1v1h-1zM6 -7h6v1h-6zM3 -6h1v1h-1zM8 -6h1v1h-1zM11 -6h1v1h-1zM3 -5h1v1h-1zM8 -5h1v1h-1zM11 -5h1v1h-1zM3 -4h1v1h-1zM8 -4h1v1h-1zM11 -4h1v1h-1zM3 -3h3v1h-3zM7 -3h1v1h-1zM11 -3h1v1h-1zM1 -2h2v1h-2zM7 -2h1v1h-1zM11 -2h1v1h-1zM6 -1h1v1h-1zM11 -1h1v1h-1zM4 0h2v1h-2zM9 0h2v1h-2z"/><path id="g57" d="M2 -8h3v1h-3zM1 -7h1v1h-1zM1 -6h1v1h-1zM1 -5h4v1h-4zM1 -4h1v1h-1zM5 -4h1v1h-1zM1 -3h1v1h-1zM5 -3h1v1h-1zM1 -2h1v1h-1zM5 -2h1v1h-1zM2 -1h3v1h-3z"/><path id="g58" d="M6 -10h1v1h-1zM6 -9h1v1h-1zM2 -8h9v1h-9zM2 -7h1v1h-1zM6 -7h1v1h-1zM10 -7h1v1h-1zM2 -6h1v1h-1zM6 -6h1v1h-1zM10 -6h1v1h-1zM2 -5h1v1h-1zM6 -5h1v1h-1zM10 -5h1v1h-1zM2 -4h9v1h-9zM2 -3h1v1h-1zM6 -3h1v1h-1zM10 -3h1v1h-1zM6 -2h1v1h-1zM6 -1h1v1h-1zM6 0h1v1h-1z"/><path id="g59" d="M6 -10h1v1h-1zM5 -9h1v1h-1zM3 -8h8v1h-8zM3 -7h1v1h-1zM10 -7h1v1h-1zM3 -6h1v1h-1zM10 -6h1v1h-1zM3 -5h8v1h-8zM3 -4h1v1h-1zM10 -4h1v1h-1zM3 -3h1v1h-1zM10 -3h1v1h-1zM3 -2h1v1h-1zM10 -2h1v1h-1zM3 -1h8v1h-8zM3 0h1v1h-1zM10 0h1v1h-1z"/><path id="g60" d="M2 -10h8v1h-8zM9 -9h1v1h-1zM4 -8h1v1h-1zM9 -8h1v1h-1zM4 -7h1v1h-1zM8 -7h1v1h-1zM3 -6h1v1h-1zM8 -6h1v1h-1zM3 -5h9v1h-9zM11 -4h1v1h-1zM11 -3h1v1h-1zM1 -2h8v1h-8zM11 -2h1v1h-1zM11 -1h1v1h-1zM9 0h2v1h-2z"/><path id="g61" d="M1 -8h4v1h-4zM1 -7h1v1h-1zM1 -6h1v1h-1zM1 -5h4v1h-4zM5 -4h1v1h-1zM5 -3h1v1h-1zM5 -2h1v1h-1zM1 -1h4v1h-4z"/><path id="g62" d="M5 -10h1v1h-1zM5 -9h1v1h-1zM1 -8h9v1h-9zM5 -7h1v1h-1zM0 -6h11v1h-11zM5 -5h1v1h-1zM4 -4h3v1h-3zM3 -3h1v1h-1zM5 -3h1v1h-1zM7 -3h1v1h-1zM2 -2h1v1h-1zM5 -2h1v1h-1zM8 -2h1v1h-1zM0 -1h2v1h-2zM5 -1h1v1h-1zM9 -1h2v1h-2zM5 0h1v1h-1z"/><path id="g63" d="M1 -10h4v1h-4zM6 -10h1v1h-1zM9 -10h1v1h-1zM1 -9h1v1h-1zM4 -9h1v1h-1zM6 -9h1v1h-1zM8 -9h1v1h-1zM2 -8h1v1h-1zM4 -8h1v1h-1zM7 -8h1v1h-1zM9 -8h1v1h-1zM3 -7h1v1h-1zM8 -7h1v1h-1zM2 -6h8v1h-8zM0 -5h2v1h-2zM10 -5h1v1h-1zM3 -4h6v1h-6zM3 -3h1v1h-1zM8 -3h1v1h-1zM3 -2h6v1h-6zM4 -1h1v1h-1zM7 -1h1v1h-1zM0 0h11v1h-11z"/><path id="g64" d="M2 -10h7v1h-7zM8 -9h1v1h-1zM2 -8h7v1h-7zM8 -7h1v1h-1zM0 -6h11v1h-11zM2 -5h1v1h-1zM5 -5h1v1h-1zM9 -5h1v1h-1zM3 -4h1v1h-1zM5 -4h2v1h-2zM8 -4h1v1h-1zM4 -3h2v1h-2zM7 -3h1v1h-1zM2 -2h2v1h-2zM5 -2h1v1h-1zM8 -2h1v1h-1zM0 -1h2v1h-2zM5 -1h1v1h-1zM9 -1h2v1h-2zM4 0h2v1h-2z"/><path id="g65" d="M1 -9h8v1h-8zM8 -8h1v1h-1zM8 -7h1v1h-1zM1 -6h1v1h-1zM8 -6h1v1h-1zM1 -5h8v1h-8zM1 -4h1v1h-1zM1 -3h1v1h-1zM10 -3h1v1h-1zM1 -2h1v1h-1zM10 -2h1v1h-1zM1 -1h1v1h-1zM10 -1h1v1h-1zM2 0h9v1h-9z"/><path id="g66" d="M0 -10h1v1h-1zM6 -10h1v1h-1zM1 -9h1v1h-1zM3 -9h8v1h-8zM2 -8h1v1h-1zM5 -8h1v1h-1zM2 -7h1v1h-1zM5 -7h1v1h-1zM7 -7h1v1h-1zM4 -6h1v1h-1zM7 -6h1v1h-1zM1 -5h1v1h-1zM3 -5h8v1h-8zM0 -4h2v1h-2zM7 -4h1v1h-1zM1 -3h1v1h-1zM5 -3h1v1h-1zM7 -3h1v1h-1zM9 -3h1v1h-1zM1 -2h1v1h-1zM4 -2h1v1h-1zM7 -2h1v1h-1zM10 -2h1v1h-1zM1 -1h1v1h-1zM3 -1h1v1h-1zM7 -1h1v1h-1zM10 -1h1v1h-1zM6 0h2v1h-2z"/><path id="g67" d="M2 -10h1v1h-1zM7 -10h1v1h-1zM2 -9h1v1h-1zM7 -9h1v1h-1zM1 -8h1v1h-1zM4 -8h7v1h-7zM1 -7h1v1h-1zM3 -7h1v1h-1zM7 -7h1v1h-1zM0 -6h3v1h-3zM5 -6h5v1h-5zM2 -5h1v1h-1zM1 -4h1v1h-1zM5 -4h5v1h-5zM0 -3h4v1h-4zM5 -3h1v1h-1zM9 -3h1v1h-1zM4 -2h2v1h-2zM9 -2h1v1h-1zM2 -1h2v1h-2zM5 -1h5v1h-5zM0 0h2v1h-2zM5 0h1v1h-1zM9 0h1v1h-1z"/><path id="g68" d="M5 -10h1v1h-1zM0 -9h11v1h-11zM0 -8h1v1h-1zM4 -8h1v1h-1zM8 -8h1v1h-1zM10 -8h1v1h-1zM1 -7h1v1h-1zM3 -7h1v1h-1zM5 -7h1v1h-1zM7 -7h1v1h-1zM0 -6h1v1h-1zM3 -6h1v1h-1zM6 -6h1v1h-1zM9 -6h1v1h-1zM3 -5h1v1h-1zM5 -5h1v1h-1zM8 -5h1v1h-1zM10 -5h1v1h-1zM0 -4h3v1h-3zM4 -4h5v1h-5zM10 -4h1v1h-1zM5 -3h1v1h-1zM2 -2h1v1h-1zM5 -2h1v1h-1zM8 -2h1v1h-1zM2 -1h1v1h-1zM5 -1h1v1h-1zM8 -1h1v1h-1zM2 0h7v1h-7z"/><path id="g69" d="M1 -10h1v1h-1zM6 -10h1v1h-1zM8 -10h1v1h-1zM1 -9h1v1h-1zM4 -9h7v1h-7zM1 -8h3v1h-3zM6 -8h1v1h-1zM8 -8h1v1h-1zM0 -7h1v1h-1zM6 -7h1v1h-1zM8 -7h1v1h-1zM0 -6h3v1h-3zM4 -6h7v1h-7zM1 -5h1v1h-1zM0 -4h4v1h-4zM5 -4h5v1h-5zM1 -3h1v1h-1zM5 -3h1v1h-1zM9 -3h1v1h-1zM1 -2h1v1h-1zM5 -2h5v1h-5zM1 -1h1v1h-1zM3 -1h1v1h-1zM5 -1h1v1h-1zM9 -1h1v1h-1zM1 0h2v1h-2zM5 0h5v1h-5z"/><path id="g70" d="M5 -10h1v1h-1zM5 -9h1v1h-1zM1 -8h9v1h-9zM1 -7h1v1h-1zM5 -7h1v1h-1zM9 -7h1v1h-1zM1 -6h1v1h-1zM5 -6h1v1h-1zM9 -6h1v1h-1zM1 -5h1v1h-1zM5 -5h1v1h-1zM9 -5h1v1h-1zM1 -4h9v1h-9zM1 -3h1v1h-1zM5 -3h1v1h-1zM9 -3h1v1h-1zM5 -2h1v1h-1zM5 -1h1v1h-1zM5 0h1v1h-1z"/><path id="g71" d="M1 -10h1v1h-1zM5 -10h1v1h-1zM8 -10h1v1h-1zM2 -9h1v1h-1zM5 -9h1v1h-1zM8 -9h1v1h-1zM2 -8h1v1h-1zM4 -8h6v1h-6zM5 -7h1v1h-1zM8 -7h1v1h-1zM0 -6h3v1h-3zM5 -6h1v1h-1zM8 -6h1v1h-1zM2 -5h9v1h-9zM2 -4h1v1h-1zM5 -4h1v1h-1zM8 -4h1v1h-1zM2 -3h1v1h-1zM5 -3h1v1h-1zM8 -3h1v1h-1zM2 -2h1v1h-1zM4 -2h1v1h-1zM8 -2h1v1h-1zM1 -1h1v1h-1zM3 -1h1v1h-1zM8 -1h1v1h-1zM0 0h1v1h-1zM4 0h7v1h-7z"/><path id="g72" d="M5 -10h1v1h-1zM2 -9h8v1h-8zM2 -8h1v1h-1zM9 -8h1v1h-1zM2 -7h8v1h-8zM2 -6h1v1h-1zM6 -6h1v1h-1zM2 -5h9v1h-9zM2 -4h1v1h-1zM5 -4h1v1h-1zM2 -3h1v1h-1zM5 -3h5v1h-5zM1 -2h1v1h-1zM5 -2h1v1h-1zM9 -2h1v1h-1zM1 -1h1v1h-1zM4 -1h1v1h-1zM9 -1h1v1h-1zM0 0h1v1h-1zM3 0h1v1h-1zM7 0h2v1h-2z"/><path id="g73" d="M2 -10h1v1h-1zM5 -10h1v1h-1zM8 -10h1v1h-1zM2 -9h1v1h-1zM5 -9h1v1h-1zM9 -9h1v1h-1zM1 -8h1v1h-1zM5 -8h1v1h-1zM1 -7h10v1h-10zM4 -6h1v1h-1zM4 -5h5v1h-5zM4 -4h1v1h-1zM8 -4h1v1h-1zM3 -3h1v1h-1zM5 -3h1v1h-1zM7 -3h1v1h-1zM2 -2h1v1h-1zM6 -2h1v1h-1zM1 -1h1v1h-1zM5 -1h1v1h-1zM7 -1h2v1h-2zM0 0h1v1h-1zM3 0h2v1h-2zM9 0h2v1h-2z"/><path id="g74" d="M3 -10h1v1h-1zM7 -10h1v1h-1zM0 -9h11v1h-11zM3 -8h1v1h-1zM7 -8h1v1h-1zM3 -6h1v1h-1zM6 -6h1v1h-1zM9 -6h1v1h-1zM2 -5h1v1h-1zM6 -5h1v1h-1zM8 -5h1v1h-1zM1 -4h2v1h-2zM6 -4h2v1h-2zM0 -3h1v1h-1zM2 -3h1v1h-1zM5 -3h2v1h-2zM2 -2h3v1h-3zM6 -2h1v1h-1zM10 -2h1v1h-1zM2 -1h1v1h-1zM6 -1h1v1h-1zM10 -1h1v1h-1zM2 0h1v1h-1zM7 0h4v1h-4z"/><path id="g75" d="M0 -10h1v1h-1zM3 -10h1v1h-1zM5 -10h1v1h-1zM7 -10h1v1h-1zM1 -9h1v1h-1zM3 -9h2v1h-2zM7 -9h1v1h-1zM0 -8h6v1h-6zM7 -8h4v1h-4zM2 -7h2v1h-2zM6 -7h2v1h-2zM9 -7h1v1h-1zM1 -6h1v1h-1zM3 -6h2v1h-2zM7 -6h1v1h-1zM9 -6h1v1h-1zM0 -5h1v1h-1zM3 -5h1v1h-1zM5 -5h1v1h-1zM7 -5h1v1h-1zM9 -5h1v1h-1zM0 -4h6v1h-6zM7 -4h1v1h-1zM9 -4h1v1h-1zM2 -3h1v1h-1zM4 -3h1v1h-1zM7 -3h1v1h-1zM9 -3h1v1h-1zM1 -2h2v1h-2zM4 -2h1v1h-1zM8 -2h1v1h-1zM3 -1h1v1h-1zM7 -1h1v1h-1zM9 -1h1v1h-1zM0 0h3v1h-3zM4 0h3v1h-3zM10 0h1v1h-1z"/><path id="g76" d="M2 -10h7v1h-7zM7 -9h1v1h-1zM6 -8h1v1h-1zM5 -7h1v1h-1zM5 -6h1v1h-1zM0 -5h11v1h-11zM5 -4h1v1h-1zM5 -3h1v1h-1zM5 -2h1v1h-1zM3 -1h1v1h-1zM5 -1h1v1h-1zM4 0h1v1h-1z"/><path id="g77" d="M2 -10h1v1h-1zM5 -10h6v1h-6zM3 -9h1v1h-1zM7 -9h1v1h-1zM7 -8h1v1h-1zM1 -7h1v1h-1zM4 -7h8v1h-8zM2 -6h1v1h-1zM5 -6h1v1h-1zM9 -6h1v1h-1zM3 -5h2v1h-2zM7 -5h1v1h-1zM10 -5h2v1h-2zM3 -4h1v1h-1zM7 -4h1v1h-1zM1 -3h2v1h-2zM5 -3h1v1h-1zM7 -3h2v1h-2zM10 -3h1v1h-1zM2 -2h1v1h-1zM5 -2h1v1h-1zM7 -2h1v1h-1zM9 -2h1v1h-1zM11 -2h1v1h-1zM2 -1h1v1h-1zM4 -1h1v1h-1zM7 -1h1v1h-1zM9 -1h1v1h-1zM11 -1h1v1h-1zM2 0h1v1h-1zM6 0h2v1h-2z"/><path id="g78" d="M3 -10h1v1h-1zM3 -9h1v1h-1zM1 -8h6v1h-6zM8 -8h4v1h-4zM3 -7h1v1h-1zM6 -7h1v1h-1zM8 -7h1v1h-1zM11 -7h1v1h-1zM3 -6h1v1h-1zM6 -6h1v1h-1zM8 -6h1v1h-1zM11 -6h1v1h-1zM3 -5h1v1h-1zM6 -5h1v1h-1zM8 -5h1v1h-1zM11 -5h1v1h-1zM3 -4h1v1h-1zM6 -4h1v1h-1zM8 -4h1v1h-1zM11 -4h1v1h-1zM3 -3h1v1h-1zM6 -3h1v1h-1zM8 -3h1v1h-1zM11 -3h1v1h-1zM2 -2h1v1h-1zM6 -2h1v1h-1zM8 -2h1v1h-1zM11 -2h1v1h-1zM2 -1h1v1h-1zM4 -1h1v1h-1zM6 -1h1v1h-1zM8 -1h4v1h-4zM1 0h1v1h-1zM5 0h1v1h-1zM8 0h1v1h-1zM11 0h1v1h-1z"/><path id="g79" d="M1 -10h5v1h-5zM7 -10h1v1h-1zM10 -10h1v1h-1zM1 -9h1v1h-1zM5 -9h1v1h-1zM7 -9h1v1h-1zM10 -9h1v1h-1zM1 -8h1v1h-1zM3 -8h1v1h-1zM5 -8h1v1h-1zM7 -8h1v1h-1zM9 -8h1v1h-1zM1 -7h1v1h-1zM3 -7h1v1h-1zM5 -7h1v1h-1zM7 -7h2v1h-2zM1 -6h1v1h-1zM3 -6h1v1h-1zM5 -6h1v1h-1zM7 -6h1v1h-1zM1 -5h1v1h-1zM3 -5h1v1h-1zM5 -5h7v1h-7zM1 -4h1v1h-1zM3 -4h1v1h-1zM5 -4h1v1h-1zM7 -4h1v1h-1zM9 -4h1v1h-1zM3 -3h1v1h-1zM7 -3h1v1h-1zM9 -3h1v1h-1zM2 -2h1v1h-1zM4 -2h1v1h-1zM7 -2h1v1h-1zM10 -2h1v1h-1zM2 -1h1v1h-1zM5 -1h1v1h-1zM7 -1h2v1h-2zM10 -1h1v1h-1zM1 0h1v1h-1zM5 0h1v1h-1zM7 0h1v1h-1zM11 0h1v1h-1z"/><path id="g80" d="M4 -4h2v1h-2zM4 -3h2v1h-2zM5 -2h1v1h-1zM4 -1h1v1h-1z"/><path id="g81" d="M3 -10h1v1h-1zM7 -10h1v1h-1zM3 -9h1v1h-1zM7 -9h4v1h-4zM1 -8h4v1h-4zM6 -8h1v1h-1zM10 -8h1v1h-1zM3 -7h1v1h-1zM5 -7h1v1h-1zM7 -7h1v1h-1zM9 -7h1v1h-1zM3 -6h1v1h-1zM8 -6h1v1h-1zM2 -5h3v1h-3zM7 -5h1v1h-1zM9 -5h1v1h-1zM2 -4h2v1h-2zM5 -4h2v1h-2zM10 -4h2v1h-2zM1 -3h1v1h-1zM3 -3h1v1h-1zM6 -3h5v1h-5zM3 -2h1v1h-1zM6 -2h1v1h-1zM10 -2h1v1h-1zM3 -1h1v1h-1zM6 -1h1v1h-1zM10 -1h1v1h-1zM3 0h1v1h-1zM6 0h5v1h-5z"/><path id="g82" d="M7 -10h1v1h-1zM9 -10h1v1h-1zM7 -9h1v1h-1zM10 -9h1v1h-1zM7 -8h1v1h-1zM1 -7h11v1h-11zM7 -6h1v1h-1zM2 -5h4v1h-4zM7 -5h1v1h-1zM4 -4h1v1h-1zM7 -4h1v1h-1zM4 -3h1v1h-1zM8 -3h1v1h-1zM4 -2h1v1h-1zM8 -2h1v1h-1zM11 -2h1v1h-1zM4 -1h2v1h-2zM9 -1h1v1h-1zM11 -1h1v1h-1zM1 0h3v1h-3zM10 0h2v1h-2z"/><path id="g83" d="M0 -5h12v1h-12z"/><path id="g84" d="M6 -10h1v1h-1zM1 -9h11v1h-11zM1 -8h1v1h-1zM5 -8h1v1h-1zM9 -8h1v1h-1zM11 -8h1v1h-1zM2 -7h1v1h-1zM4 -7h1v1h-1zM6 -7h1v1h-1zM8 -7h1v1h-1zM1 -6h1v1h-1zM4 -6h1v1h-1zM7 -6h1v1h-1zM10 -6h1v1h-1zM4 -5h1v1h-1zM6 -5h1v1h-1zM9 -5h1v1h-1zM11 -5h1v1h-1zM1 -4h3v1h-3zM5 -4h5v1h-5zM11 -4h1v1h-1zM6 -3h1v1h-1zM3 -2h1v1h-1zM6 -2h1v1h-1zM9 -2h1v1h-1zM3 -1h1v1h-1zM6 -1h1v1h-1zM9 -1h1v1h-1zM3 0h7v1h-7z"/><path id="g85" d="M3 -10h7v1h-7zM3 -9h1v1h-1zM9 -9h1v1h-1zM3 -8h7v1h-7zM11 -8h1v1h-1zM3 -7h1v1h-1zM11 -7h1v1h-1zM4 -6h8v1h-8zM8 -5h1v1h-1zM1 -4h11v1h-11zM4 -3h1v1h-1zM8 -3h1v1h-1zM5 -2h1v1h-1zM8 -2h1v1h-1zM5 -1h1v1h-1zM8 -1h1v1h-1zM7 0h2v1h-2z"/><path id="g86" d="M4 -10h2v1h-2zM6 -9h1v1h-1zM6 -8h1v1h-1zM6 -7h1v1h-1zM5 -6h1v1h-1zM7 -6h1v1h-1zM5 -5h1v1h-1zM7 -5h1v1h-1zM4 -4h1v1h-1zM8 -4h1v1h-1zM4 -3h1v1h-1zM8 -3h1v1h-1zM3 -2h1v1h-1zM9 -2h1v1h-1zM2 -1h1v1h-1zM10 -1h1v1h-1zM1 0h1v1h-1zM11 0h1v1h-1z"/><path id="g87" d="M3 -10h7v1h-7zM9 -9h1v1h-1zM3 -8h7v1h-7zM9 -7h1v1h-1zM1 -6h11v1h-11zM3 -5h1v1h-1zM6 -5h1v1h-1zM10 -5h1v1h-1zM4 -4h1v1h-1zM6 -4h2v1h-2zM9 -4h1v1h-1zM5 -3h2v1h-2zM8 -3h1v1h-1zM3 -2h2v1h-2zM6 -2h1v1h-1zM9 -2h1v1h-1zM1 -1h2v1h-2zM6 -1h1v1h-1zM10 -1h2v1h-2zM5 0h2v1h-2z"/><path id="g88" d="M3 -10h1v1h-1zM9 -10h1v1h-1zM4 -9h1v1h-1zM8 -9h1v1h-1zM2 -8h9v1h-9zM4 -7h1v1h-1zM8 -7h1v1h-1zM4 -6h1v1h-1zM8 -6h1v1h-1zM4 -5h1v1h-1zM8 -5h1v1h-1zM1 -4h11v1h-11zM4 -3h1v1h-1zM8 -3h1v1h-1zM4 -2h1v1h-1zM8 -2h1v1h-1zM3 -1h1v1h-1zM8 -1h1v1h-1zM2 0h1v1h-1zM8 0h1v1h-1z"/><path id="g89" d="M1 -10h6v1h-6zM6 -9h1v1h-1zM10 -9h1v1h-1zM6 -8h1v1h-1zM9 -8h1v1h-1zM6 -7h1v1h-1zM8 -7h1v1h-1zM6 -6h3v1h-3zM6 -5h1v1h-1zM9 -5h1v1h-1zM6 -4h1v1h-1zM10 -4h1v1h-1zM7 -3h1v1h-1zM7 -2h1v1h-1zM11 -2h1v1h-1zM8 -1h1v1h-1zM11 -1h1v1h-1zM9 0h3v1h-3z"/><path id="g90" d="M3 -10h1v1h-1zM3 -9h1v1h-1zM6 -9h4v1h-4zM3 -8h1v1h-1zM6 -8h1v1h-1zM9 -8h1v1h-1zM1 -7h6v1h-6zM9 -7h1v1h-1zM3 -6h1v1h-1zM6 -6h1v1h-1zM9 -6h1v1h-1zM2 -5h3v1h-3zM6 -5h1v1h-1zM9 -5h1v1h-1zM2 -4h2v1h-2zM5 -4h2v1h-2zM9 -4h1v1h-1zM1 -3h1v1h-1zM3 -3h1v1h-1zM6 -3h1v1h-1zM9 -3h1v1h-1zM1 -2h1v1h-1zM3 -2h1v1h-1zM6 -2h1v1h-1zM9 -2h1v1h-1zM3 -1h1v1h-1zM5 -1h1v1h-1zM9 -1h1v1h-1zM11 -1h1v1h-1zM3 0h2v1h-2zM9 0h3v1h-3z"/><path id="g91" d="M1 -10h11v1h-11zM5 -9h1v1h-1zM7 -9h1v1h-1zM2 -8h9v1h-9zM2 -7h1v1h-1zM5 -7h1v1h-1zM7 -7h1v1h-1zM10 -7h1v1h-1zM2 -6h9v1h-9zM3 -4h7v1h-7zM1 -2h11v1h-11zM3 -1h1v1h-1zM6 -1h1v1h-1zM9 -1h1v1h-1zM1 0h2v1h-2zM5 0h2v1h-2zM10 0h2v1h-2z"/><path id="g92" d="M1 -9h11v1h-11zM6 -8h1v1h-1zM6 -7h1v1h-1zM3 -6h1v1h-1zM6 -6h1v1h-1zM3 -5h1v1h-1zM6 -5h5v1h-5zM3 -4h1v1h-1zM6 -4h1v1h-1zM3 -3h1v1h-1zM6 -3h1v1h-1zM3 -2h1v1h-1zM6 -2h1v1h-1zM3 -1h1v1h-1zM6 -1h1v1h-1zM1 0h11v1h-11z"/><path id="g93" d="M7 -10h4v1h-4zM2 -9h5v1h-5zM6 -8h1v1h-1zM2 -7h9v1h-9zM6 -6h1v1h-1zM6 -5h1v1h-1zM1 -4h11v1h-11zM6 -3h1v1h-1zM6 -2h1v1h-1zM6 -1h1v1h-1zM5 0h2v1h-2z"/><path id="g94" d="M8 -10h1v1h-1zM2 -9h4v1h-4zM8 -9h1v1h-1zM8 -8h1v1h-1zM7 -7h5v1h-5zM1 -6h6v1h-6zM8 -6h1v1h-1zM11 -6h1v1h-1zM3 -5h1v1h-1zM8 -5h1v1h-1zM11 -5h1v1h-1zM3 -4h1v1h-1zM8 -4h1v1h-1zM11 -4h1v1h-1zM2 -3h1v1h-1zM5 -3h1v1h-1zM8 -3h1v1h-1zM11 -3h1v1h-1zM1 -2h5v1h-5zM7 -2h1v1h-1zM11 -2h1v1h-1zM5 -1h1v1h-1zM7 -1h1v1h-1zM11 -1h1v1h-1zM6 0h1v1h-1zM9 0h2v1h-2z"/><path id="g95" d="M3 -10h1v1h-1zM3 -9h1v1h-1zM6 -9h6v1h-6zM1 -8h5v1h-5zM9 -8h1v1h-1zM3 -7h1v1h-1zM9 -7h1v1h-1zM3 -6h1v1h-1zM5 -6h1v1h-1zM9 -6h1v1h-1zM3 -5h2v1h-2zM9 -5h1v1h-1zM2 -4h2v1h-2zM9 -4h1v1h-1zM1 -3h1v1h-1zM3 -3h1v1h-1zM9 -3h1v1h-1zM3 -2h1v1h-1zM9 -2h1v1h-1zM3 -1h1v1h-1zM9 -1h1v1h-1zM1 0h3v1h-3zM7 0h3v1h-3z"/><path id="g96" d="M2 -10h9v1h-9zM2 -9h1v1h-1zM2 -8h1v1h-1zM4 -8h1v1h-1zM9 -8h1v1h-1zM2 -7h1v1h-1zM5 -7h1v1h-1zM9 -7h1v1h-1zM2 -6h1v1h-1zM6 -6h1v1h-1zM8 -6h1v1h-1zM2 -5h1v1h-1zM7 -5h1v1h-1zM2 -4h1v1h-1zM6 -4h1v1h-1zM8 -4h1v1h-1zM2 -3h1v1h-1zM5 -3h1v1h-1zM9 -3h1v1h-1zM2 -2h1v1h-1zM4 -2h1v1h-1zM9 -2h1v1h-1zM2 -1h1v1h-1zM2 0h10v1h-10z"/><path id="g97" d="M4 -10h1v1h-1zM6 -10h5v1h-5zM1 -9h3v1h-3zM6 -9h1v1h-1zM10 -9h1v1h-1zM3 -8h1v1h-1zM6 -8h1v1h-1zM10 -8h1v1h-1zM1 -7h4v1h-4zM6 -7h5v1h-5zM3 -6h1v1h-1zM3 -5h2v1h-2zM6 -5h5v1h-5zM2 -4h2v1h-2zM5 -4h1v1h-1zM8 -4h1v1h-1zM2 -3h2v1h-2zM6 -3h5v1h-5zM1 -2h1v1h-1zM3 -2h1v1h-1zM8 -2h1v1h-1zM3 -1h1v1h-1zM8 -1h1v1h-1zM3 0h1v1h-1zM5 0h7v1h-7z"/><path id="g98" d="M1 -10h1v1h-1zM4 -10h1v1h-1zM6 -10h1v1h-1zM8 -10h1v1h-1zM2 -9h1v1h-1zM4 -9h2v1h-2zM8 -9h1v1h-1zM1 -8h6v1h-6zM8 -8h4v1h-4zM3 -7h2v1h-2zM7 -7h2v1h-2zM10 -7h1v1h-1zM2 -6h1v1h-1zM4 -6h2v1h-2zM8 -6h1v1h-1zM10 -6h1v1h-1zM1 -5h1v1h-1zM4 -5h1v1h-1zM6 -5h1v1h-1zM8 -5h1v1h-1zM10 -5h1v1h-1zM1 -4h6v1h-6zM8 -4h1v1h-1zM10 -4h1v1h-1zM3 -3h1v1h-1zM5 -3h1v1h-1zM8 -3h1v1h-1zM10 -3h1v1h-1zM2 -2h2v1h-2zM5 -2h1v1h-1zM9 -2h1v1h-1zM4 -1h1v1h-1zM8 -1h1v1h-1zM10 -1h1v1h-1zM1 0h3v1h-3zM5 0h3v1h-3zM11 0h1v1h-1z"/><path id="g99" d="M2 -10h1v1h-1zM6 -10h4v1h-4zM3 -9h1v1h-1zM6 -9h1v1h-1zM9 -9h1v1h-1zM6 -8h1v1h-1zM9 -8h1v1h-1zM5 -7h1v1h-1zM9 -7h3v1h-3zM1 -6h3v1h-3zM3 -5h1v1h-1zM5 -5h6v1h-6zM3 -4h1v1h-1zM6 -4h1v1h-1zM10 -4h1v1h-1zM3 -3h1v1h-1zM7 -3h1v1h-1zM9 -3h1v1h-1zM3 -2h2v1h-2zM8 -2h1v1h-1zM3 -1h1v1h-1zM7 -1h1v1h-1zM9 -1h1v1h-1zM4 0h3v1h-3zM10 0h2v1h-2z"/><path id="g100" d="M2 -10h9v1h-9zM2 -9h1v1h-1zM5 -9h1v1h-1zM7 -9h1v1h-1zM10 -9h1v1h-1zM2 -8h9v1h-9zM6 -7h1v1h-1zM1 -6h11v1h-11zM3 -5h1v1h-1zM9 -5h1v1h-1zM3 -4h7v1h-7zM3 -3h1v1h-1zM9 -3h1v1h-1zM3 -2h7v1h-7zM3 -1h1v1h-1zM9 -1h1v1h-1zM1 0h11v1h-11z"/><path id="g101" d="M4 -10h1v1h-1zM7 -10h1v1h-1zM9 -10h1v1h-1zM4 -9h1v1h-1zM7 -9h1v1h-1zM10 -9h1v1h-1zM3 -8h1v1h-1zM7 -8h1v1h-1zM3 -7h1v1h-1zM7 -7h5v1h-5zM2 -6h2v1h-2zM5 -6h3v1h-3zM1 -5h1v1h-1zM3 -5h1v1h-1zM7 -5h1v1h-1zM3 -4h1v1h-1zM7 -4h1v1h-1zM3 -3h1v1h-1zM8 -3h1v1h-1zM3 -2h1v1h-1zM8 -2h1v1h-1zM11 -2h1v1h-1zM3 -1h1v1h-1zM9 -1h1v1h-1zM11 -1h1v1h-1zM3 0h1v1h-1zM10 0h2v1h-2z"/><path id="g102" d="M5 -10h7v1h-7zM1 -9h5v1h-5zM8 -9h1v1h-1zM11 -9h1v1h-1zM3 -8h1v1h-1zM5 -8h7v1h-7zM3 -7h1v1h-1zM5 -7h1v1h-1zM8 -7h1v1h-1zM11 -7h1v1h-1zM3 -6h1v1h-1zM5 -6h1v1h-1zM8 -6h1v1h-1zM11 -6h1v1h-1zM1 -5h11v1h-11zM3 -4h1v1h-1zM8 -4h1v1h-1zM3 -3h1v1h-1zM6 -3h5v1h-5zM3 -2h2v1h-2zM8 -2h1v1h-1zM1 -1h2v1h-2zM8 -1h1v1h-1zM5 0h7v1h-7z"/><path id="g103" d="M2 -8h3v1h-3zM3 -7h1v1h-1zM3 -6h1v1h-1zM3 -5h1v1h-1zM3 -4h1v1h-1zM3 -3h1v1h-1zM3 -2h1v1h-1zM2 -1h3v1h-3z"/><path id="g104" d="M1 -8h4v1h-4zM1 -7h1v1h-1zM5 -7h1v1h-1zM1 -6h1v1h-1zM5 -6h1v1h-1zM1 -5h1v1h-1zM5 -5h1v1h-1zM1 -4h4v1h-4zM1 -3h1v1h-1zM1 -2h1v1h-1zM1 -1h1v1h-1z"/><path id="g105" d="M3 -10h1v1h-1zM8 -10h1v1h-1zM3 -9h1v1h-1zM5 -9h7v1h-7zM1 -8h5v1h-5zM11 -8h1v1h-1zM3 -7h1v1h-1zM7 -7h1v1h-1zM9 -7h1v1h-1zM3 -6h1v1h-1zM6 -6h1v1h-1zM10 -6h1v1h-1zM3 -5h3v1h-3zM11 -5h1v1h-1zM2 -4h2v1h-2zM6 -4h5v1h-5zM1 -3h1v1h-1zM3 -3h1v1h-1zM8 -3h1v1h-1zM3 -2h1v1h-1zM8 -2h1v1h-1zM3 -1h1v1h-1zM8 -1h1v1h-1zM1 0h3v1h-3zM5 0h7v1h-7z"/><path id="g106" d="M4 -10h1v1h-1zM11 -10h1v1h-1zM2 -9h1v1h-1zM4 -9h1v1h-1zM9 -9h1v1h-1zM11 -9h1v1h-1zM2 -8h6v1h-6zM9 -8h1v1h-1zM11 -8h1v1h-1zM1 -7h1v1h-1zM4 -7h1v1h-1zM9 -7h1v1h-1zM11 -7h1v1h-1zM1 -6h7v1h-7zM9 -6h1v1h-1zM11 -6h1v1h-1zM4 -5h1v1h-1zM9 -5h1v1h-1zM11 -5h1v1h-1zM2 -4h6v1h-6zM9 -4h1v1h-1zM11 -4h1v1h-1zM2 -3h1v1h-1zM4 -3h1v1h-1zM7 -3h1v1h-1zM9 -3h1v1h-1zM11 -3h1v1h-1zM2 -2h1v1h-1zM4 -2h1v1h-1zM7 -2h1v1h-1zM11 -2h1v1h-1zM2 -1h1v1h-1zM4 -1h1v1h-1zM6 -1h2v1h-2zM11 -1h1v1h-1zM4 0h1v1h-1zM9 0h3v1h-3z"/><path id="g107" d="M2 -10h10v1h-10zM6 -9h1v1h-1zM5 -8h1v1h-1zM2 -7h10v1h-10zM2 -6h1v1h-1zM5 -6h1v1h-1zM8 -6h1v1h-1zM11 -6h1v1h-1zM2 -5h1v1h-1zM5 -5h4v1h-4zM11 -5h1v1h-1zM2 -4h1v1h-1zM5 -4h1v1h-1zM8 -4h1v1h-1zM11 -4h1v1h-1zM2 -3h1v1h-1zM5 -3h4v1h-4zM11 -3h1v1h-1zM2 -2h1v1h-1zM5 -2h1v1h-1zM8 -2h1v1h-1zM11 -2h1v1h-1zM2 -1h10v1h-10zM2 0h1v1h-1zM11 0h1v1h-1z"/><path id="g108" d="M3 -10h1v1h-1zM9 -10h2v1h-2zM3 -9h1v1h-1zM6 -9h3v1h-3zM1 -8h6v1h-6zM3 -7h1v1h-1zM6 -7h1v1h-1zM3 -6h1v1h-1zM6 -6h5v1h-5zM2 -5h3v1h-3zM6 -5h1v1h-1zM10 -5h1v1h-1zM2 -4h2v1h-2zM5 -4h3v1h-3zM10 -4h1v1h-1zM1 -3h1v1h-1zM3 -3h1v1h-1zM6 -3h1v1h-1zM8 -3h2v1h-2zM3 -2h1v1h-1zM5 -2h1v1h-1zM9 -2h1v1h-1zM3 -1h1v1h-1zM5 -1h1v1h-1zM8 -1h1v1h-1zM10 -1h1v1h-1zM3 0h2v1h-2zM6 0h2v1h-2zM11 0h1v1h-1z"/><path id="g109" d="M4 -10h1v1h-1zM6 -10h5v1h-5zM4 -9h1v1h-1zM8 -9h1v1h-1zM10 -9h1v1h-1zM2 -8h5v1h-5zM8 -8h1v1h-1zM10 -8h1v1h-1zM4 -7h1v1h-1zM7 -7h1v1h-1zM9 -7h2v1h-2zM1 -6h6v1h-6zM4 -5h1v1h-1zM7 -5h4v1h-4zM2 -4h1v1h-1zM4 -4h4v1h-4zM10 -4h1v1h-1zM2 -3h1v1h-1zM4 -3h1v1h-1zM7 -3h1v1h-1zM10 -3h1v1h-1zM2 -2h3v1h-3zM7 -2h4v1h-4zM1 -1h1v1h-1zM4 -1h2v1h-2zM1 0h1v1h-1zM6 0h6v1h-6z"/><path id="g110" d="M6 -10h1v1h-1zM6 -9h1v1h-1zM6 -8h1v1h-1zM6 -7h1v1h-1zM6 -6h1v1h-1zM6 -5h1v1h-1zM5 -4h1v1h-1zM7 -4h1v1h-1zM5 -3h1v1h-1zM7 -3h1v1h-1zM4 -2h1v1h-1zM8 -2h1v1h-1zM3 -1h1v1h-1zM9 -1h1v1h-1zM1 0h2v1h-2zM10 0h2v1h-2z"/><path id="g111" d="M2 -10h9v1h-9zM2 -9h1v1h-1zM6 -9h1v1h-1zM10 -9h1v1h-1zM2 -8h1v1h-1zM6 -8h1v1h-1zM10 -8h1v1h-1zM2 -7h9v1h-9zM2 -6h1v1h-1zM6 -6h1v1h-1zM10 -6h1v1h-1zM2 -5h1v1h-1zM6 -5h1v1h-1zM10 -5h1v1h-1zM2 -4h9v1h-9zM2 -3h1v1h-1zM6 -3h1v1h-1zM10 -3h1v1h-1zM2 -2h1v1h-1zM6 -2h1v1h-1zM10 -2h1v1h-1zM1 -1h1v1h-1zM6 -1h1v1h-1zM10 -1h1v1h-1zM1 0h1v1h-1zM6 0h1v1h-1zM9 0h2v1h-2z"/><path id="g112" d="M6 -10h1v1h-1zM7 -9h1v1h-1zM3 -8h8v1h-8zM3 -7h1v1h-1zM10 -7h1v1h-1zM3 -6h1v1h-1zM10 -6h1v1h-1zM3 -5h8v1h-8zM3 -4h1v1h-1zM3 -3h1v1h-1zM3 -2h1v1h-1zM2 -1h1v1h-1zM1 0h1v1h-1z"/><path id="g113" d="M4 -10h1v1h-1zM4 -9h7v1h-7zM4 -8h1v1h-1zM9 -8h1v1h-1zM3 -7h1v1h-1zM5 -7h1v1h-1zM8 -7h1v1h-1zM2 -6h1v1h-1zM6 -6h2v1h-2zM6 -5h1v1h-1zM4 -4h7v1h-7zM1 -3h4v1h-4zM10 -3h1v1h-1zM4 -2h1v1h-1zM10 -2h1v1h-1zM4 -1h1v1h-1zM10 -1h1v1h-1zM4 0h7v1h-7z"/><path id="g114" d="M3 -8h1v1h-1zM1 -7h1v1h-1zM3 -7h1v1h-1zM5 -7h1v1h-1zM2 -6h3v1h-3zM2 -5h3v1h-3zM1 -4h1v1h-1zM3 -4h1v1h-1zM5 -4h1v1h-1zM3 -3h1v1h-1z"/><path id="g115" d="M1 -10h1v1h-1zM5 -10h6v1h-6zM2 -9h1v1h-1zM5 -9h1v1h-1zM10 -9h1v1h-1zM2 -8h1v1h-1zM5 -8h6v1h-6zM5 -7h1v1h-1zM10 -7h1v1h-1zM1 -6h2v1h-2zM5 -6h6v1h-6zM2 -5h1v1h-1zM5 -5h1v1h-1zM2 -4h1v1h-1zM5 -4h1v1h-1zM7 -4h2v1h-2zM10 -4h1v1h-1zM2 -3h1v1h-1zM5 -3h1v1h-1zM9 -3h1v1h-1zM2 -2h1v1h-1zM5 -2h3v1h-3zM10 -2h1v1h-1zM1 -1h1v1h-1zM3 -1h2v1h-2zM1 0h1v1h-1zM5 0h7v1h-7z"/><path id="g116" d="M6 -10h1v1h-1zM2 -9h1v1h-1zM6 -9h1v1h-1zM10 -9h1v1h-1zM2 -8h1v1h-1zM6 -8h1v1h-1zM10 -8h1v1h-1zM2 -7h1v1h-1zM6 -7h1v1h-1zM10 -7h1v1h-1zM2 -6h9v1h-9zM6 -5h1v1h-1zM1 -4h1v1h-1zM6 -4h1v1h-1zM11 -4h1v1h-1zM1 -3h1v1h-1zM6 -3h1v1h-1zM11 -3h1v1h-1zM1 -2h1v1h-1zM6 -2h1v1h-1zM11 -2h1v1h-1zM1 -1h1v1h-1zM6 -1h1v1h-1zM11 -1h1v1h-1zM1 0h11v1h-11z"/><path id="g117" d="M6 -10h2v1h-2zM11 -10h1v1h-1zM2 -9h4v1h-4zM11 -9h1v1h-1zM4 -8h1v1h-1zM9 -8h1v1h-1zM11 -8h1v1h-1zM1 -7h7v1h-7zM9 -7h1v1h-1zM11 -7h1v1h-1zM2 -6h1v1h-1zM4 -6h1v1h-1zM6 -6h1v1h-1zM9 -6h1v1h-1zM11 -6h1v1h-1zM1 -5h2v1h-2zM4 -5h1v1h-1zM6 -5h2v1h-2zM9 -5h1v1h-1zM11 -5h1v1h-1zM2 -4h1v1h-1zM4 -4h1v1h-1zM6 -4h1v1h-1zM9 -4h1v1h-1zM11 -4h1v1h-1zM1 -3h2v1h-2zM4 -3h1v1h-1zM6 -3h2v1h-2zM9 -3h1v1h-1zM11 -3h1v1h-1zM3 -2h3v1h-3zM11 -2h1v1h-1zM2 -1h1v1h-1zM4 -1h1v1h-1zM6 -1h1v1h-1zM11 -1h1v1h-1zM1 0h1v1h-1zM4 0h1v1h-1zM7 0h1v1h-1zM9 0h3v1h-3z"/><path id="g118" d="M6 -10h1v1h-1zM5 -9h1v1h-1zM7 -9h1v1h-1zM4 -8h1v1h-1zM8 -8h1v1h-1zM3 -7h1v1h-1zM9 -7h1v1h-1zM1 -6h2v1h-2zM4 -6h5v1h-5zM10 -6h2v1h-2zM6 -5h1v1h-1zM2 -4h9v1h-9zM6 -3h1v1h-1zM4 -2h1v1h-1zM6 -2h1v1h-1zM8 -2h1v1h-1zM3 -1h1v1h-1zM6 -1h1v1h-1zM9 -1h1v1h-1zM2 0h1v1h-1zM5 0h2v1h-2zM10 0h1v1h-1z"/><path id="g119" d="M2 -10h4v1h-4zM7 -10h5v1h-5zM2 -9h1v1h-1zM5 -9h1v1h-1zM9 -9h1v1h-1zM2 -8h4v1h-4zM7 -8h5v1h-5zM2 -7h1v1h-1zM5 -7h1v1h-1zM7 -7h1v1h-1zM11 -7h1v1h-1zM2 -6h4v1h-4zM7 -6h1v1h-1zM9 -6h1v1h-1zM11 -6h1v1h-1zM7 -5h1v1h-1zM9 -5h1v1h-1zM11 -5h1v1h-1zM1 -4h7v1h-7zM9 -4h1v1h-1zM11 -4h1v1h-1zM2 -3h1v1h-1zM4 -3h1v1h-1zM7 -3h1v1h-1zM9 -3h1v1h-1zM2 -2h1v1h-1zM4 -2h3v1h-3zM8 -2h1v1h-1zM10 -2h1v1h-1zM1 -1h1v1h-1zM3 -1h2v1h-2zM7 -1h1v1h-1zM11 -1h1v1h-1zM1 0h1v1h-1zM5 0h7v1h-7z"/><path id="g120" d="M4 -10h1v1h-1zM8 -10h1v1h-1zM4 -9h1v1h-1zM8 -9h1v1h-1zM3 -8h1v1h-1zM9 -8h1v1h-1zM3 -7h1v1h-1zM9 -7h1v1h-1zM2 -6h1v1h-1zM10 -6h1v1h-1zM1 -5h1v1h-1zM3 -5h7v1h-7zM11 -5h1v1h-1zM5 -4h1v1h-1zM9 -4h1v1h-1zM5 -3h1v1h-1zM9 -3h1v1h-1zM4 -2h1v1h-1zM9 -2h1v1h-1zM3 -1h1v1h-1zM9 -1h1v1h-1zM1 0h2v1h-2zM7 0h2v1h-2z"/><path id="g121" d="M3 -6h2v1h-2zM3 -5h2v1h-2zM3 -2h2v1h-2zM3 -1h2v1h-2z"/><path id="g122" d="M1 -9h11v1h-11zM9 -8h1v1h-1zM3 -7h4v1h-4zM9 -7h1v1h-1zM3 -6h1v1h-1zM6 -6h1v1h-1zM9 -6h1v1h-1zM3 -5h1v1h-1zM6 -5h1v1h-1zM9 -5h1v1h-1zM3 -4h4v1h-4zM9 -4h1v1h-1zM3 -3h1v1h-1zM6 -3h1v1h-1zM9 -3h1v1h-1zM9 -2h1v1h-1zM9 -1h1v1h-1zM7 0h3v1h-3z"/><path id="g123" d="M2 -10h1v1h-1zM7 -10h1v1h-1zM3 -9h1v1h-1zM7 -9h1v1h-1zM3 -8h1v1h-1zM6 -8h6v1h-6zM6 -7h1v1h-1zM10 -7h1v1h-1zM3 -6h1v1h-1zM5 -6h1v1h-1zM8 -6h1v1h-1zM3 -5h1v1h-1zM8 -5h1v1h-1zM1 -4h2v1h-2zM8 -4h1v1h-1zM2 -3h1v1h-1zM7 -3h1v1h-1zM9 -3h1v1h-1zM2 -2h1v1h-1zM7 -2h1v1h-1zM9 -2h1v1h-1zM2 -1h1v1h-1zM6 -1h1v1h-1zM10 -1h1v1h-1zM4 0h2v1h-2zM11 0h1v1h-1z"/><path id="g124" d="M3 -2h1v1h-1zM3 -1h1v1h-1z"/></defs><g fill="#000"><use href="#g0" x="48" y="17"/><use href="#g1" x="60" y="17"/><use href="#g2" x="72" y="17"/><use href="#g3" x="84" y="17"/><use href="#g4" x="96" y="17"/><use href="#g5" x="108" y="17"/><use href="#g6" x="120" y="17"/><use href="#g7" x="194" y="17"/><use href="#g8" x="206" y="17"/><use href="#g9" x="218" y="17"/><use href="#g10" x="230" y="17"/><use href="#g11" x="245" y="17"/><use href="#g12" x="8" y="46"/><use href="#g13" x="20" y="46"/><use href="#g14" x="45" y="46"/><use href="#g14" x="51" y="46"/><use href="#g13" x="57" y="46"/><use href="#g15" x="69" y="46"/><use href="#g16" x="123" y="46"/><use href="#g17" x="135" y="46"/><use href="#g18" x="252" y="46"/><use href="#g19" x="264" y="46"/><use href="#g20" x="312" y="46"/><use href="#g21" x="324" y="46"/><use href="#g22" x="336" y="46"/><use href="#g23" x="348" y="46"/><use href="#g24" x="373" y="46"/><use href="#g20" x="385" y="46"/><use href="#g25" x="397" y="46"/><use href="#g26" x="409" y="46"/><use href="#g13" x="421" y="46"/><use href="#g27" x="448" y="46"/><use href="#g28" x="460" y="46"/><use href="#g29" x="518" y="46"/><use href="#g25" x="530" y="46"/><use href="#g26" x="542" y="46"/><use href="#g25" x="568" y="46"/><use href="#g26" x="580" y="46"/><use href="#g30" x="592" y="46"/><use href="#g31" x="604" y="46"/><use href="#g62" x="5" y="679"/><use href="#g63" x="17" y="679"/><use href="#g64" x="29" y="679"/><use href="#g65" x="64" y="679"/><use href="#g63" x="76" y="679"/><use href="#g64" x="88" y="679"/><use href="#g66" x="130" y="679"/><use href="#g67" x="142" y="679"/><use href="#g68" x="177" y="679"/><use href="#g69" x="189" y="679"/><use href="#g63" x="224" y="679"/><use href="#g64" x="236" y="679"/><use href="#g70" x="248" y="679"/><use href="#g71" x="283" y="679"/><use href="#g72" x="295" y="679"/><use href="#g10" x="307" y="679"/><use href="#g73" x="349" y="679"/><use href="#g74" x="361" y="679"/><use href="#g75" x="373" y="679"/><use href="#g76" x="408" y="679"/><use href="#g72" x="420" y="679"/><use href="#g10" x="432" y="679"/><use href="#g77" x="684" y="42"/><use href="#g78" x="696" y="42"/><use href="#g79" x="708" y="42"/><use href="#g13" x="720" y="42"/><use href="#g80" x="732" y="42"/><use href="#g81" x="744" y="42"/><use href="#g82" x="756" y="42"/><use href="#g14" x="768" y="42"/><use href="#g14" x="774" y="42"/><use href="#g83" x="780" y="42"/><use href="#g83" x="792" y="42"/><use href="#g84" x="804" y="42"/><use href="#g15" x="816" y="42"/><use href="#g85" x="707" y="243"/><use href="#g86" x="719" y="243"/><use href="#g79" x="731" y="243"/><use href="#g13" x="743" y="243"/><use href="#g77" x="774" y="243"/><use href="#g78" x="786" y="243"/><use href="#g79" x="798" y="243"/><use href="#g13" x="810" y="243"/><use href="#g53" x="880" y="243"/><use href="#g87" x="892" y="243"/><use href="#g88" x="904" y="243"/><use href="#g89" x="916" y="243"/><use href="#g90" x="928" y="243"/><use href="#g91" x="940" y="243"/><use href="#g92" x="975" y="243"/><use href="#g20" x="987" y="243"/><use href="#g53" x="999" y="243"/><use href="#g87" x="1011" y="243"/><use href="#g93" x="690" y="268"/><use href="#g94" x="702" y="268"/><use href="#g95" x="714" y="268"/><use href="#g15" x="726" y="268"/><use href="#g96" x="738" y="268"/><use href="#g53" x="922" y="308"/><use href="#g87" x="934" y="308"/><use href="#g21" x="946" y="308"/><use href="#g97" x="958" y="308"/><use href="#g98" x="970" y="308"/><use href="#g35" x="994" y="308"/><use href="#g32" x="1000" y="308"/><use href="#g95" x="689" y="346"/><use href="#g15" x="701" y="346"/><use href="#g99" x="713" y="346"/><use href="#g100" x="725" y="346"/><use href="#g101" x="758" y="346"/><use href="#g102" x="770" y="346"/><use href="#g103" x="782" y="346"/><use href="#g104" x="788" y="346"/><use href="#g99" x="794" y="346"/><use href="#g100" x="806" y="346"/><use href="#g105" x="839" y="346"/><use href="#g106" x="851" y="346"/><use href="#g107" x="863" y="346"/><use href="#g108" x="875" y="346"/><use href="#g109" x="700" y="373"/><use href="#g110" x="712" y="373"/><use href="#g95" x="724" y="373"/><use href="#g15" x="736" y="373"/><use href="#g111" x="699" y="394"/><use href="#g112" x="711" y="394"/><use href="#g113" x="723" y="394"/><use href="#g49" x="735" y="394"/><use href="#g84" x="836" y="395"/><use href="#g15" x="848" y="395"/><use href="#g49" x="860" y="395"/><use href="#g114" x="873" y="396"/><use href="#g114" x="879" y="396"/><use href="#g114" x="885" y="396"/><use href="#g114" x="891" y="396"/><use href="#g114" x="897" y="396"/><use href="#g114" x="903" y="396"/><use href="#g114" x="909" y="396"/><use href="#g114" x="915" y="396"/><use href="#g114" x="921" y="396"/><use href="#g114" x="927" y="396"/><use href="#g114" x="933" y="396"/><use href="#g114" x="939" y="396"/><use href="#g53" x="965" y="395"/><use href="#g87" x="977" y="395"/><use href="#g115" x="1009" y="395"/><use href="#g116" x="1021" y="395"/><use href="#g117" x="702" y="480"/><use href="#g118" x="714" y="480"/><use href="#g119" x="726" y="480"/><use href="#g120" x="738" y="480"/><use href="#g121" x="750" y="480"/><use href="#g37" x="762" y="480"/><use href="#g32" x="768" y="480"/><use href="#g34" x="774" y="480"/><use href="#g33" x="780" y="480"/><use href="#g80" x="786" y="480"/><use href="#g122" x="798" y="480"/><use href="#g95" x="810" y="480"/><use href="#g15" x="822" y="480"/><use href="#g123" x="834" y="480"/><use href="#g98" x="846" y="480"/><use href="#g121" x="858" y="480"/><use href="#g37" x="870" y="480"/><use href="#g32" x="876" y="480"/><use href="#g34" x="882" y="480"/><use href="#g124" x="888" y="480"/><use href="#g33" x="894" y="480"/></g><g fill="#fff"><use href="#g32" x="8" y="66"/><use href="#g33" x="45" y="66"/><use href="#g34" x="51" y="66"/><use href="#g35" x="57" y="66"/><use href="#g36" x="63" y="66"/><use href="#g37" x="69" y="66"/><use href="#g36" x="75" y="66"/><use href="#g37" x="81" y="66"/><use href="#g38" x="87" y="66"/><use href="#g37" x="93" y="66"/><use href="#g39" x="99" y="66"/><use href="#g40" x="123" y="66"/><use href="#g41" x="129" y="66"/><use href="#g42" x="135" y="66"/><use href="#g43" x="141" y="66"/><use href="#g44" x="147" y="66"/><use href="#g45" x="153" y="66"/><use href="#g46" x="159" y="66"/><use href="#g47" x="171" y="66"/><use href="#g48" x="177" y="66"/><use href="#g49" x="183" y="66"/><use href="#g50" x="195" y="66"/><use href="#g51" x="207" y="66"/><use href="#g52" x="219" y="66"/><use href="#g52" x="225" y="66"/><use href="#g53" x="252" y="66"/><use href="#g54" x="264" y="66"/><use href="#g55" x="276" y="66"/><use href="#g56" x="288" y="66"/><use href="#g32" x="312" y="66"/><use href="#g49" x="318" y="66"/><use href="#g36" x="324" y="66"/><use href="#g49" x="330" y="66"/><use href="#g35" x="336" y="66"/><use href="#g32" x="342" y="66"/><use href="#g57" x="373" y="66"/><use href="#g57" x="379" y="66"/><use href="#g36" x="385" y="66"/><use href="#g36" x="391" y="66"/><use href="#g36" x="397" y="66"/><use href="#g27" x="448" y="66"/><use href="#g28" x="460" y="66"/><use href="#g58" x="472" y="66"/><use href="#g59" x="568" y="66"/><use href="#g60" x="580" y="66"/><use href="#g38" x="8" y="82"/><use href="#g33" x="45" y="82"/><use href="#g37" x="51" y="82"/><use href="#g35" x="57" y="82"/><use href="#g37" x="63" y="82"/><use href="#g37" x="69" y="82"/><use href="#g34" x="75" y="82"/><use href="#g35" x="81" y="82"/><use href="#g32" x="87" y="82"/><use href="#g38" x="93" y="82"/><use href="#g57" x="99" y="82"/><use href="#g40" x="123" y="82"/><use href="#g41" x="129" y="82"/><use href="#g42" x="135" y="82"/><use href="#g43" x="141" y="82"/><use href="#g44" x="147" y="82"/><use href="#g45" x="153" y="82"/><use href="#g46" x="159" y="82"/><use href="#g47" x="171" y="82"/><use href="#g48" x="177" y="82"/><use href="#g49" x="183" y="82"/><use href="#g50" x="195" y="82"/><use href="#g51" x="207" y="82"/><use href="#g52" x="219" y="82"/><use href="#g52" x="225" y="82"/><use href="#g53" x="252" y="82"/><use href="#g54" x="264" y="82"/><use href="#g55" x="276" y="82"/><use href="#g56" x="288" y="82"/><use href="#g32" x="312" y="82"/><use href="#g49" x="318" y="82"/><use href="#g36" x="324" y="82"/><use href="#g49" x="330" y="82"/><use href="#g35" x="336" y="82"/><use href="#g32" x="342" y="82"/><use href="#g57" x="373" y="82"/><use href="#g57" x="379" y="82"/><use href="#g36" x="385" y="82"/><use href="#g36" x="391" y="82"/><use href="#g36" x="397" y="82"/><use href="#g27" x="448" y="82"/><use href="#g28" x="460" y="82"/><use href="#g58" x="472" y="82"/><use href="#g59" x="568" y="82"/><use href="#g60" x="580" y="82"/><use href="#g33" x="8" y="98"/><use href="#g33" x="45" y="98"/><use href="#g39" x="51" y="98"/><use href="#g34" x="57" y="98"/><use href="#g32" x="63" y="98"/><use href="#g35" x="69" y="98"/><use href="#g61" x="75" y="98"/><use href="#g38" x="81" y="98"/><use href="#g37" x="87" y="98"/><use href="#g33" x="93" y="98"/><use href="#g57" x="99" y="98"/><use href="#g40" x="123" y="98"/><use href="#g41" x="129" y="98"/><use href="#g42" x="135" y="98"/><use href="#g43" x="141" y="98"/><use href="#g44" x="147" y="98"/><use href="#g45" x="153" y="98"/><use href="#g46" x="159" y="98"/><use href="#g47" x="171" y="98"/><use href="#g48" x="177" y="98"/><use href="#g49" x="183" y="98"/><use href="#g50" x="195" y="98"/><use href="#g51" x="207" y="98"/><use href="#g52" x="219" y="98"/><use href="#g52" x="225" y="98"/><use href="#g53" x="252" y="98"/><use href="#g54" x="264" y="98"/><use href="#g55" x="276" y="98"/><use href="#g56" x="288" y="98"/><use href="#g32" x="312" y="98"/><use href="#g49" x="318" y="98"/><use href="#g36" x="324" y="98"/><use href="#g49" x="330" y="98"/><use href="#g35" x="336" y="98"/><use href="#g37" x="342" y="98"/><use href="#g57" x="373" y="98"/><use href="#g57" x="379" y="98"/><use href="#g36" x="385" y="98"/><use href="#g36" x="391" y="98"/><use href="#g36" x="397" y="98"/><use href="#g27" x="448" y="98"/><use href="#g28" x="460" y="98"/><use href="#g58" x="472" y="98"/><use href="#g59" x="568" y="98"/><use href="#g60" x="580" y="98"/><use href="#g35" x="8" y="114"/><use href="#g33" x="45" y="114"/><use href="#g57" x="51" y="114"/><use href="#g33" x="57" y="114"/><use href="#g35" x="63" y="114"/><use href="#g35" x="69" y="114"/><use href="#g32" x="75" y="114"/><use href="#g37" x="81" y="114"/><use href="#g33" x="87" y="114"/><use href="#g32" x="93" y="114"/><use href="#g33" x="99" y="114"/><use href="#g40" x="123" y="114"/><use href="#g41" x="129" y="114"/><use href="#g42" x="135" y="114"/><use href="#g43" x="141" y="114"/><use href="#g44" x="147" y="114"/><use href="#g45" x="153" y="114"/><use href="#g46" x="159" y="114"/><use href="#g47" x="171" y="114"/><use href="#g48" x="177" y="114"/><use href="#g49" x="183" y="114"/><use href="#g50" x="195" y="114"/><use href="#g51" x="207" y="114"/><use href="#g52" x="219" y="114"/><use href="#g52" x="225" y="114"/><use href="#g53" x="252" y="114"/><use href="#g54" x="264" y="114"/><use href="#g55" x="276" y="114"/><use href="#g56" x="288" y="114"/><use href="#g32" x="312" y="114"/><use href="#g49" x="318" y="114"/><use href="#g36" x="324" y="114"/><use href="#g49" x="330" y="114"/><use href="#g35" x="336" y="114"/><use href="#g32" x="342" y="114"/><use href="#g57" x="373" y="114"/><use href="#g57" x="379" y="114"/><use href="#g36" x="385" y="114"/><use href="#g36" x="391" y="114"/><use href="#g36" x="397" y="114"/><use href="#g27" x="448" y="114"/><use href="#g28" x="460" y="114"/><use href="#g58" x="472" y="114"/><use href="#g59" x="568" y="114"/><use href="#g60" x="580" y="114"/><use href="#g36" x="8" y="130"/><use href="#g33" x="45" y="130"/><use href="#g37" x="51" y="130"/><use href="#g38" x="57" y="130"/><use href="#g37" x="63" y="130"/><use href="#g34" x="69" y="130"/><use href="#g38" x="75" y="130"/><use href="#g36" x="81" y="130"/><use href="#g61" x="87" y="130"/><use href="#g32" x="93" y="130"/><use href="#g35" x="99" y="130"/><use href="#g40" x="123" y="130"/><use href="#g41" x="129" y="130"/><use href="#g42" x="135" y="130"/><use href="#g43" x="141" y="130"/><use href="#g44" x="147" y="130"/><use href="#g45" x="153" y="130"/><use href="#g46" x="159" y="130"/><use href="#g47" x="171" y="130"/><use href="#g48" x="177" y="130"/><use href="#g49" x="183" y="130"/><use href="#g50" x="195" y="130"/><use href="#g51" x="207" y="130"/><use href="#g52" x="219" y="130"/><use href="#g52" x="225" y="130"/><use href="#g53" x="252" y="130"/><use href="#g54" x="264" y="130"/><use href="#g55" x="276" y="130"/><use href="#g56" x="288" y="130"/><use href="#g32" x="312" y="130"/><use href="#g49" x="318" y="130"/><use href="#g36" x="324" y="130"/><use href="#g49" x="330" y="130"/><use href="#g35" x="336" y="130"/><use href="#g32" x="342" y="130"/><use href="#g57" x="373" y="130"/><use href="#g57" x="379" y="130"/><use href="#g36" x="385" y="130"/><use href="#g36" x="391" y="130"/><use href="#g36" x="397" y="130"/><use href="#g27" x="448" y="130"/><use href="#g28" x="460" y="130"/><use href="#g58" x="472" y="130"/><use href="#g59" x="568" y="130"/><use href="#g60" x="580" y="130"/><use href="#g61" x="8" y="146"/><use href="#g33" x="45" y="146"/><use href="#g39" x="51" y="146"/><use href="#g34" x="57" y="146"/><use href="#g33" x="63" y="146"/><use href="#g35" x="69" y="146"/><use href="#g35" x="75" y="146"/><use href="#g33" x="81" y="146"/><use href="#g57" x="87" y="146"/><use href="#g37" x="93" y="146"/><use href="#g34" x="99" y="146"/><use href="#g40" x="123" y="146"/><use href="#g41" x="129" y="146"/><use href="#g42" x="135" y="146"/><use href="#g43" x="141" y="146"/><use href="#g44" x="147" y="146"/><use href="#g45" x="153" y="146"/><use href="#g46" x="159" y="146"/><use href="#g47" x="171" y="146"/><use href="#g48" x="177" y="146"/><use href="#g49" x="183" y="146"/><use href="#g50" x="195" y="146"/><use href="#g51" x="207" y="146"/><use href="#g52" x="219" y="146"/><use href="#g52" x="225" y="146"/><use href="#g53" x="252" y="146"/><use href="#g54" x="264" y="146"/><use href="#g55" x="276" y="146"/><use href="#g56" x="288" y="146"/><use href="#g32" x="312" y="146"/><use href="#g49" x="318" y="146"/><use href="#g36" x="324" y="146"/><use href="#g49" x="330" y="146"/><use href="#g33" x="336" y="146"/><use href="#g39" x="342" y="146"/><use href="#g57" x="373" y="146"/><use href="#g57" x="379" y="146"/><use href="#g36" x="385" y="146"/><use href="#g36" x="391" y="146"/><use href="#g36" x="397" y="146"/><use href="#g27" x="448" y="146"/><use href="#g28" x="460" y="146"/><use href="#g58" x="472" y="146"/><use href="#g59" x="568" y="146"/><use href="#g60" x="580" y="146"/><use href="#g57" x="8" y="162"/><use href="#g33" x="45" y="162"/><use href="#g37" x="51" y="162"/><use href="#g38" x="57" y="162"/><use href="#g38" x="63" y="162"/><use href="#g34" x="69" y="162"/><use href="#g38" x="75" y="162"/><use href="#g34" x="81" y="162"/><use href="#g39" x="87" y="162"/><use href="#g34" x="93" y="162"/><use href="#g35" x="99" y="162"/><use href="#g40" x="123" y="162"/><use href="#g41" x="129" y="162"/><use href="#g42" x="135" y="162"/><use href="#g43" x="141" y="162"/><use href="#g44" x="147" y="162"/><use href="#g45" x="153" y="162"/><use href="#g46" x="159" y="162"/><use href="#g47" x="171" y="162"/><use href="#g48" x="177" y="162"/><use href="#g49" x="183" y="162"/><use href="#g50" x="195" y="162"/><use href="#g51" x="207" y="162"/><use href="#g52" x="219" y="162"/><use href="#g52" x="225" y="162"/><use href="#g53" x="252" y="162"/><use href="#g54" x="264" y="162"/><use href="#g55" x="276" y="162"/><use href="#g56" x="288" y="162"/><use href="#g32" x="312" y="162"/><use href="#g49" x="318" y="162"/><use href="#g36" x="324" y="162"/><use href="#g49" x="330" y="162"/><use href="#g33" x="336" y="162"/><use href="#g39" x="342" y="162"/><use href="#g57" x="373" y="162"/><use href="#g57" x="379" y="162"/><use href="#g36" x="385" y="162"/><use href="#g36" x="391" y="162"/><use href="#g36" x="397" y="162"/><use href="#g27" x="448" y="162"/><use href="#g28" x="460" y="162"/><use href="#g58" x="472" y="162"/><use href="#g59" x="568" y="162"/><use href="#g60" x="580" y="162"/><use href="#g34" x="8" y="178"/><use href="#g33" x="45" y="178"/><use href="#g37" x="51" y="178"/><use href="#g32" x="57" y="178"/><use href="#g39" x="63" y="178"/><use href="#g39" x="69" y="178"/><use href="#g36" x="75" y="178"/><use href="#g35" x="81" y="178"/><use href="#g61" x="87" y="178"/><use href="#g61" x="93" y="178"/><use href="#g35" x="99" y="178"/><use href="#g40" x="123" y="178"/><use href="#g41" x="129" y="178"/><use href="#g42" x="135" y="178"/><use href="#g43" x="141" y="178"/><use href="#g44" x="147" y="178"/><use href="#g45" x="153" y="178"/><use href="#g46" x="159" y="178"/><use href="#g47" x="171" y="178"/><use href="#g48" x="177" y="178"/><use href="#g49" x="183" y="178"/><use href="#g50" x="195" y="178"/><use href="#g51" x="207" y="178"/><use href="#g52" x="219" y="178"/><use href="#g52" x="225" y="178"/><use href="#g53" x="252" y="178"/><use href="#g54" x="264" y="178"/><use href="#g55" x="276" y="178"/><use href="#g56" x="288" y="178"/><use href="#g32" x="312" y="178"/><use href="#g49" x="318" y="178"/><use href="#g36" x="324" y="178"/><use href="#g49" x="330" y="178"/><use href="#g35" x="336" y="178"/><use href="#g32" x="342" y="178"/><use href="#g57" x="373" y="178"/><use href="#g57" x="379" y="178"/><use href="#g36" x="385" y="178"/><use href="#g36" x="391" y="178"/><use href="#g36" x="397" y="178"/><use href="#g27" x="448" y="178"/><use href="#g28" x="460" y="178"/><use href="#g58" x="472" y="178"/><use href="#g59" x="568" y="178"/><use href="#g60" x="580" y="178"/><use href="#g37" x="8" y="194"/><use href="#g33" x="45" y="194"/><use href="#g34" x="51" y="194"/><use href="#g39" x="57" y="194"/><use href="#g39" x="63" y="194"/><use href="#g33" x="69" y="194"/><use href="#g61" x="75" y="194"/><use href="#g34" x="81" y="194"/><use href="#g57" x="87" y="194"/><use href="#g32" x="93" y="194"/><use href="#g36" x="99" y="194"/><use href="#g40" x="123" y="194"/><use href="#g41" x="129" y="194"/><use href="#g42" x="135" y="194"/><use href="#g43" x="141" y="194"/><use href="#g44" x="147" y="194"/><use href="#g45" x="153" y="194"/><use href="#g46" x="159" y="194"/><use href="#g47" x="171" y="194"/><use href="#g48" x="177" y="194"/><use href="#g49" x="183" y="194"/><use href="#g50" x="195" y="194"/><use href="#g51" x="207" y="194"/><use href="#g52" x="219" y="194"/><use href="#g52" x="225" y="194"/><use href="#g53" x="252" y="194"/><use href="#g54" x="264" y="194"/><use href="#g55" x="276" y="194"/><use href="#g56" x="288" y="194"/><use href="#g32" x="312" y="194"/><use href="#g49" x="318" y="194"/><use href="#g36" x="324" y="194"/><use href="#g49" x="330" y="194"/><use href="#g35" x="336" y="194"/><use href="#g32" x="342" y="194"/><use href="#g57" x="373" y="194"/><use href="#g57" x="379" y="194"/><use href="#g36" x="385" y="194"/><use href="#g36" x="391" y="194"/><use href="#g36" x="397" y="194"/><use href="#g27" x="448" y="194"/><use href="#g28" x="460" y="194"/><use href="#g58" x="472" y="194"/><use href="#g59" x="568" y="194"/><use href="#g60" x="580" y="194"/><use href="#g39" x="8" y="210"/><use href="#g33" x="45" y="210"/><use href="#g34" x="51" y="210"/><use href="#g33" x="57" y="210"/><use href="#g39" x="63" y="210"/><use href="#g36" x="69" y="210"/><use href="#g33" x="75" y="210"/><use href="#g33" x="81" y="210"/><use href="#g33" x="87" y="210"/><use href="#g57" x="93" y="210"/><use href="#g35" x="99" y="210"/><use href="#g40" x="123" y="210"/><use href="#g41" x="129" y="210"/><use href="#g42" x="135" y="210"/><use href="#g43" x="141" y="210"/><use href="#g44" x="147" y="210"/><use href="#g45" x="153" y="210"/><use href="#g46" x="159" y="210"/><use href="#g47" x="171" y="210"/><use href="#g48" x="177" y="210"/><use href="#g49" x="183" y="210"/><use href="#g50" x="195" y="210"/><use href="#g51" x="207" y="210"/><use href="#g52" x="219" y="210"/><use href="#g52" x="225" y="210"/><use href="#g53" x="252" y="210"/><use href="#g54" x="264" y="210"/><use href="#g55" x="276" y="210"/><use href="#g56" x="288" y="210"/><use href="#g32" x="312" y="210"/><use href="#g49" x="318" y="210"/><use href="#g36" x="324" y="210"/><use href="#g49" x="330" y="210"/><use href="#g35" x="336" y="210"/><use href="#g32" x="342" y="210"/><use href="#g57" x="373" y="210"/><use href="#g57" x="379" y="210"/><use href="#g36" x="385" y="210"/><use href="#g36" x="391" y="210"/><use href="#g36" x="397" y="210"/><use href="#g27" x="448" y="210"/><use href="#g28" x="460" y="210"/><use href="#g58" x="472" y="210"/><use href="#g59" x="568" y="210"/><use href="#g60" x="580" y="210"/><use href="#g38" x="8" y="226"/><use href="#g32" x="14" y="226"/><use href="#g33" x="45" y="226"/><use href="#g37" x="51" y="226"/><use href="#g35" x="57" y="226"/><use href="#g39" x="63" y="226"/><use href="#g57" x="69" y="226"/><use href="#g39" x="75" y="226"/><use href="#g34" x="81" y="226"/><use href="#g39" x="87" y="226"/><use href="#g57" x="93" y="226"/><use href="#g34" x="99" y="226"/><use href="#g40" x="123" y="226"/><use href="#g41" x="129" y="226"/><use href="#g42" x="135" y="226"/><use href="#g43" x="141" y="226"/><use href="#g44" x="147" y="226"/><use href="#g45" x="153" y="226"/><use href="#g46" x="159" y="226"/><use href="#g47" x="171" y="226"/><use href="#g48" x="177" y="226"/><use href="#g49" x="183" y="226"/><use href="#g50" x="195" y="226"/><use href="#g51" x="207" y="226"/><use href="#g52" x="219" y="226"/><use href="#g52" x="225" y="226"/><use href="#g53" x="252" y="226"/><use href="#g54" x="264" y="226"/><use href="#g55" x="276" y="226"/><use href="#g56" x="288" y="226"/><use href="#g32" x="312" y="226"/><use href="#g49" x="318" y="226"/><use href="#g36" x="324" y="226"/><use href="#g49" x="330" y="226"/><use href="#g35" x="336" y="226"/><use href="#g32" x="342" y="226"/><use href="#g57" x="373" y="226"/><use href="#g57" x="379" y="226"/><use href="#g36" x="385" y="226"/><use href="#g36" x="391" y="226"/><use href="#g36" x="397" y="226"/><use href="#g27" x="448" y="226"/><use href="#g28" x="460" y="226"/><use href="#g58" x="472" y="226"/><use href="#g59" x="568" y="226"/><use href="#g60" x="580" y="226"/><use href="#g38" x="8" y="242"/><use href="#g38" x="14" y="242"/><use href="#g33" x="45" y="242"/><use href="#g37" x="51" y="242"/><use href="#g34" x="57" y="242"/><use href="#g37" x="63" y="242"/><use href="#g39" x="69" y="242"/><use href="#g39" x="75" y="242"/><use href="#g36" x="81" y="242"/><use href="#g33" x="87" y="242"/><use href="#g39" x="93" y="242"/><use href="#g36" x="99" y="242"/><use href="#g40" x="123" y="242"/><use href="#g41" x="129" y="242"/><use href="#g42" x="135" y="242"/><use href="#g43" x="141" y="242"/><use href="#g44" x="147" y="242"/><use href="#g45" x="153" y="242"/><use href="#g46" x="159" y="242"/><use href="#g47" x="171" y="242"/><use href="#g48" x="177" y="242"/><use href="#g49" x="183" y="242"/><use href="#g50" x="195" y="242"/><use href="#g51" x="207" y="242"/><use href="#g52" x="219" y="242"/><use href="#g52" x="225" y="242"/><use href="#g53" x="252" y="242"/><use href="#g54" x="264" y="242"/><use href="#g55" x="276" y="242"/><use href="#g56" x="288" y="242"/><use href="#g32" x="312" y="242"/><use href="#g49" x="318" y="242"/><use href="#g36" x="324" y="242"/><use href="#g49" x="330" y="242"/><use href="#g35" x="336" y="242"/><use href="#g61" x="342" y="242"/><use href="#g57" x="373" y="242"/><use href="#g57" x="379" y="242"/><use href="#g36" x="385" y="242"/><use href="#g36" x="391" y="242"/><use href="#g36" x="397" y="242"/><use href="#g27" x="448" y="242"/><use href="#g28" x="460" y="242"/><use href="#g58" x="472" y="242"/><use href="#g59" x="568" y="242"/><use href="#g60" x="580" y="242"/><use href="#g38" x="8" y="258"/><use href="#g33" x="14" y="258"/><use href="#g33" x="45" y="258"/><use href="#g36" x="51" y="258"/><use href="#g37" x="57" y="258"/><use href="#g33" x="63" y="258"/><use href="#g33" x="69" y="258"/><use href="#g61" x="75" y="258"/><use href="#g33" x="81" y="258"/><use href="#g36" x="87" y="258"/><use href="#g37" x="93" y="258"/><use href="#g36" x="99" y="258"/><use href="#g40" x="123" y="258"/><use href="#g41" x="129" y="258"/><use href="#g42" x="135" y="258"/><use href="#g43" x="141" y="258"/><use href="#g44" x="147" y="258"/><use href="#g45" x="153" y="258"/><use href="#g46" x="159" y="258"/><use href="#g47" x="171" y="258"/><use href="#g48" x="177" y="258"/><use href="#g49" x="183" y="258"/><use href="#g50" x="195" y="258"/><use href="#g51" x="207" y="258"/><use href="#g52" x="219" y="258"/><use href="#g52" x="225" y="258"/><use href="#g53" x="252" y="258"/><use href="#g54" x="264" y="258"/><use href="#g55" x="276" y="258"/><use href="#g56" x="288" y="258"/><use href="#g32" x="312" y="258"/><use href="#g49" x="318" y="258"/><use href="#g36" x="324" y="258"/><use href="#g49" x="330" y="258"/><use href="#g35" x="336" y="258"/><use href="#g36" x="342" y="258"/><use href="#g57" x="373" y="258"/><use href="#g57" x="379" y="258"/><use href="#g36" x="385" y="258"/><use href="#g36" x="391" y="258"/><use href="#g36" x="397" y="258"/><use href="#g27" x="448" y="258"/><use href="#g28" x="460" y="258"/><use href="#g58" x="472" y="258"/><use href="#g59" x="568" y="258"/><use href="#g60" x="580" y="258"/><use href="#g38" x="8" y="274"/><use href="#g35" x="14" y="274"/><use href="#g33" x="45" y="274"/><use href="#g37" x="51" y="274"/><use href="#g36" x="57" y="274"/><use href="#g37" x="63" y="274"/><use href="#g37" x="69" y="274"/><use href="#g61" x="75" y="274"/><use href="#g32" x="81" y="274"/><use href="#g35" x="87" y="274"/><use href="#g57" x="93" y="274"/><use href="#g33" x="99" y="274"/><use href="#g40" x="123" y="274"/><use href="#g41" x="129" y="274"/><use href="#g42" x="135" y="274"/><use href="#g43" x="141" y="274"/><use href="#g44" x="147" y="274"/><use href="#g45" x="153" y="274"/><use href="#g46" x="159" y="274"/><use href="#g47" x="171" y="274"/><use href="#g48" x="177" y="274"/><use href="#g49" x="183" y="274"/><use href="#g50" x="195" y="274"/><use href="#g51" x="207" y="274"/><use href="#g52" x="219" y="274"/><use href="#g52" x="225" y="274"/><use href="#g53" x="252" y="274"/><use href="#g54" x="264" y="274"/><use href="#g55" x="276" y="274"/><use href="#g56" x="288" y="274"/><use href="#g32" x="312" y="274"/><use href="#g49" x="318" y="274"/><use href="#g36" x="324" y="274"/><use href="#g49" x="330" y="274"/><use href="#g35" x="336" y="274"/><use href="#g61" x="342" y="274"/><use href="#g57" x="373" y="274"/><use href="#g57" x="379" y="274"/><use href="#g36" x="385" y="274"/><use href="#g36" x="391" y="274"/><use href="#g36" x="397" y="274"/><use href="#g27" x="448" y="274"/><use href="#g28" x="460" y="274"/><use href="#g58" x="472" y="274"/><use href="#g59" x="568" y="274"/><use href="#g60" x="580" y="274"/><use href="#g38" x="8" y="290"/><use href="#g36" x="14" y="290"/><use href="#g33" x="45" y="290"/><use href="#g37" x="51" y="290"/><use href="#g35" x="57" y="290"/><use href="#g38" x="63" y="290"/><use href="#g39" x="69" y="290"/><use href="#g34" x="75" y="290"/><use href="#g61" x="81" y="290"/><use href="#g39" x="87" y="290"/><use href="#g36" x="93" y="290"/><use href="#g39" x="99" y="290"/><use href="#g40" x="123" y="290"/><use href="#g41" x="129" y="290"/><use href="#g42" x="135" y="290"/><use href="#g43" x="141" y="290"/><use href="#g44" x="147" y="290"/><use href="#g45" x="153" y="290"/><use href="#g46" x="159" y="290"/><use href="#g47" x="171" y="290"/><use href="#g48" x="177" y="290"/><use href="#g49" x="183" y="290"/><use href="#g50" x="195" y="290"/><use href="#g51" x="207" y="290"/><use href="#g52" x="219" y="290"/><use href="#g52" x="225" y="290"/><use href="#g53" x="252" y="290"/><use href="#g54" x="264" y="290"/><use href="#g55" x="276" y="290"/><use href="#g56" x="288" y="290"/><use href="#g32" x="312" y="290"/><use href="#g49" x="318" y="290"/><use href="#g36" x="324" y="290"/><use href="#g49" x="330" y="290"/><use href="#g35" x="336" y="290"/><use href="#g57" x="342" y="290"/><use href="#g57" x="373" y="290"/><use href="#g57" x="379" y="290"/><use href="#g36" x="385" y="290"/><use href="#g36" x="391" y="290"/><use href="#g36" x="397" y="290"/><use href="#g27" x="448" y="290"/><use href="#g28" x="460" y="290"/><use href="#g58" x="472" y="290"/><use href="#g59" x="568" y="290"/><use href="#g60" x="580" y="290"/><use href="#g38" x="8" y="306"/><use href="#g61" x="14" y="306"/><use href="#g33" x="45" y="306"/><use href="#g57" x="51" y="306"/><use href="#g61" x="57" y="306"/><use href="#g37" x="63" y="306"/><use href="#g61" x="69" y="306"/><use href="#g33" x="75" y="306"/><use href="#g39" x="81" y="306"/><use href="#g36" x="87" y="306"/><use href="#g35" x="93" y="306"/><use href="#g61" x="99" y="306"/><use href="#g40" x="123" y="306"/><use href="#g41" x="129" y="306"/><use href="#g42" x="135" y="306"/><use href="#g43" x="141" y="306"/><use href="#g44" x="147" y="306"/><use href="#g45" x="153" y="306"/><use href="#g46" x="159" y="306"/><use href="#g47" x="171" y="306"/><use href="#g48" x="177" y="306"/><use href="#g49" x="183" y="306"/><use href="#g50" x="195" y="306"/><use href="#g51" x="207" y="306"/><use href="#g52" x="219" y="306"/><use href="#g52" x="225" y="306"/><use href="#g53" x="252" y="306"/><use href="#g54" x="264" y="306"/><use href="#g55" x="276" y="306"/><use href="#g56" x="288" y="306"/><use href="#g32" x="312" y="306"/><use href="#g49" x="318" y="306"/><use href="#g36" x="324" y="306"/><use href="#g49" x="330" y="306"/><use href="#g35" x="336" y="306"/><use href="#g57" x="342" y="306"/><use href="#g57" x="373" y="306"/><use href="#g57" x="379" y="306"/><use href="#g36" x="385" y="306"/><use href="#g36" x="391" y="306"/><use href="#g36" x="397" y="306"/><use href="#g27" x="448" y="306"/><use href="#g28" x="460" y="306"/><use href="#g58" x="472" y="306"/><use href="#g59" x="568" y="306"/><use href="#g60" x="580" y="306"/><use href="#g38" x="8" y="322"/><use href="#g57" x="14" y="322"/><use href="#g33" x="45" y="322"/><use href="#g34" x="51" y="322"/><use href="#g39" x="57" y="322"/><use href="#g33" x="63" y="322"/><use href="#g39" x="69" y="322"/><use href="#g37" x="75" y="322"/><use href="#g36" x="81" y="322"/><use href="#g33" x="87" y="322"/><use href="#g38" x="93" y="322"/><use href="#g61" x="99" y="322"/><use href="#g40" x="123" y="322"/><use href="#g41" x="129" y="322"/><use href="#g42" x="135" y="322"/><use href="#g43" x="141" y="322"/><use href="#g44" x="147" y="322"/><use href="#g45" x="153" y="322"/><use href="#g46" x="159" y="322"/><use href="#g47" x="171" y="322"/><use href="#g48" x="177" y="322"/><use href="#g49" x="183" y="322"/><use href="#g50" x="195" y="322"/><use href="#g51" x="207" y="322"/><use href="#g52" x="219" y="322"/><use href="#g52" x="225" y="322"/><use href="#g53" x="252" y="322"/><use href="#g54" x="264" y="322"/><use href="#g55" x="276" y="322"/><use href="#g56" x="288" y="322"/><use href="#g32" x="312" y="322"/><use href="#g49" x="318" y="322"/><use href="#g36" x="324" y="322"/><use href="#g49" x="330" y="322"/><use href="#g35" x="336" y="322"/><use href="#g34" x="342" y="322"/><use href="#g57" x="373" y="322"/><use href="#g57" x="379" y="322"/><use href="#g36" x="385" y="322"/><use href="#g36" x="391" y="322"/><use href="#g36" x="397" y="322"/><use href="#g27" x="448" y="322"/><use href="#g28" x="460" y="322"/><use href="#g58" x="472" y="322"/><use href="#g59" x="568" y="322"/><use href="#g60" x="580" y="322"/><use href="#g38" x="8" y="338"/><use href="#g34" x="14" y="338"/><use href="#g33" x="45" y="338"/><use href="#g37" x="51" y="338"/><use href="#g36" x="57" y="338"/><use href="#g33" x="63" y="338"/><use href="#g38" x="69" y="338"/><use href="#g39" x="75" y="338"/><use href="#g61" x="81" y="338"/><use href="#g57" x="87" y="338"/><use href="#g57" x="93" y="338"/><use href="#g32" x="99" y="338"/><use href="#g40" x="123" y="338"/><use href="#g41" x="129" y="338"/><use href="#g42" x="135" y="338"/><use href="#g43" x="141" y="338"/><use href="#g44" x="147" y="338"/><use href="#g45" x="153" y="338"/><use href="#g46" x="159" y="338"/><use href="#g47" x="171" y="338"/><use href="#g48" x="177" y="338"/><use href="#g49" x="183" y="338"/><use href="#g50" x="195" y="338"/><use href="#g51" x="207" y="338"/><use href="#g52" x="219" y="338"/><use href="#g52" x="225" y="338"/><use href="#g53" x="252" y="338"/><use href="#g54" x="264" y="338"/><use href="#g55" x="276" y="338"/><use href="#g56" x="288" y="338"/><use href="#g32" x="312" y="338"/><use href="#g49" x="318" y="338"/><use href="#g36" x="324" y="338"/><use href="#g49" x="330" y="338"/><use href="#g35" x="336" y="338"/><use href="#g57" x="342" y="338"/><use href="#g57" x="373" y="338"/><use href="#g57" x="379" y="338"/><use href="#g36" x="385" y="338"/><use href="#g36" x="391" y="338"/><use href="#g36" x="397" y="338"/><use href="#g27" x="448" y="338"/><use href="#g28" x="460" y="338"/><use href="#g58" x="472" y="338"/><use href="#g59" x="568" y="338"/><use href="#g60" x="580" y="338"/><use href="#g38" x="8" y="354"/><use href="#g37" x="14" y="354"/><use href="#g33" x="45" y="354"/><use href="#g37" x="51" y="354"/><use href="#g35" x="57" y="354"/><use href="#g61" x="63" y="354"/><use href="#g57" x="69" y="354"/><use href="#g37" x="75" y="354"/><use href="#g35" x="81" y="354"/><use href="#g35" x="87" y="354"/><use href="#g35" x="93" y="354"/><use href="#g37" x="99" y="354"/><use href="#g40" x="123" y="354"/><use href="#g41" x="129" y="354"/><use href="#g42" x="135" y="354"/><use href="#g43" x="141" y="354"/><use href="#g44" x="147" y="354"/><use href="#g45" x="153" y="354"/><use href="#g46" x="159" y="354"/><use href="#g47" x="171" y="354"/><use href="#g48" x="177" y="354"/><use href="#g49" x="183" y="354"/><use href="#g50" x="195" y="354"/><use href="#g51" x="207" y="354"/><use href="#g52" x="219" y="354"/><use href="#g52" x="225" y="354"/><use href="#g53" x="252" y="354"/><use href="#g54" x="264" y="354"/><use href="#g55" x="276" y="354"/><use href="#g56" x="288" y="354"/><use href="#g32" x="312" y="354"/><use href="#g49" x="318" y="354"/><use href="#g36" x="324" y="354"/><use href="#g49" x="330" y="354"/><use href="#g35" x="336" y="354"/><use href="#g38" x="342" y="354"/><use href="#g57" x="373" y="354"/><use href="#g57" x="379" y="354"/><use href="#g36" x="385" y="354"/><use href="#g36" x="391" y="354"/><use href="#g36" x="397" y="354"/><use href="#g27" x="448" y="354"/><use href="#g28" x="460" y="354"/><use href="#g58" x="472" y="354"/><use href="#g59" x="568" y="354"/><use href="#g60" x="580" y="354"/><use href="#g38" x="8" y="370"/><use href="#g39" x="14" y="370"/><use href="#g33" x="45" y="370"/><use href="#g37" x="51" y="370"/><use href="#g34" x="57" y="370"/><use href="#g34" x="63" y="370"/><use href="#g35" x="69" y="370"/><use href="#g32" x="75" y="370"/><use href="#g61" x="81" y="370"/><use href="#g33" x="87" y="370"/><use href="#g34" x="93" y="370"/><use href="#g35" x="99" y="370"/><use href="#g40" x="123" y="370"/><use href="#g41" x="129" y="370"/><use href="#g42" x="135" y="370"/><use href="#g43" x="141" y="370"/><use href="#g44" x="147" y="370"/><use href="#g45" x="153" y="370"/><use href="#g46" x="159" y="370"/><use href="#g47" x="171" y="370"/><use href="#g48" x="177" y="370"/><use href="#g49" x="183" y="370"/><use href="#g50" x="195" y="370"/><use href="#g51" x="207" y="370"/><use href="#g52" x="219" y="370"/><use href="#g52" x="225" y="370"/><use href="#g53" x="252" y="370"/><use href="#g54" x="264" y="370"/><use href="#g55" x="276" y="370"/><use href="#g56" x="288" y="370"/><use href="#g32" x="312" y="370"/><use href="#g49" x="318" y="370"/><use href="#g36" x="324" y="370"/><use href="#g49" x="330" y="370"/><use href="#g35" x="336" y="370"/><use href="#g34" x="342" y="370"/><use href="#g57" x="373" y="370"/><use href="#g57" x="379" y="370"/><use href="#g36" x="385" y="370"/><use href="#g36" x="391" y="370"/><use href="#g36" x="397" y="370"/><use href="#g27" x="448" y="370"/><use href="#g28" x="460" y="370"/><use href="#g58" x="472" y="370"/><use href="#g59" x="568" y="370"/><use href="#g60" x="580" y="370"/><use href="#g33" x="8" y="386"/><use href="#g32" x="14" y="386"/><use href="#g33" x="45" y="386"/><use href="#g34" x="51" y="386"/><use href="#g61" x="57" y="386"/><use href="#g57" x="63" y="386"/><use href="#g35" x="69" y="386"/><use href="#g61" x="75" y="386"/><use href="#g38" x="81" y="386"/><use href="#g33" x="87" y="386"/><use href="#g36" x="93" y="386"/><use href="#g36" x="99" y="386"/><use href="#g40" x="123" y="386"/><use href="#g41" x="129" y="386"/><use href="#g42" x="135" y="386"/><use href="#g43" x="141" y="386"/><use href="#g44" x="147" y="386"/><use href="#g45" x="153" y="386"/><use href="#g46" x="159" y="386"/><use href="#g47" x="171" y="386"/><use href="#g48" x="177" y="386"/><use href="#g49" x="183" y="386"/><use href="#g50" x="195" y="386"/><use href="#g51" x="207" y="386"/><use href="#g52" x="219" y="386"/><use href="#g52" x="225" y="386"/><use href="#g53" x="252" y="386"/><use href="#g54" x="264" y="386"/><use href="#g55" x="276" y="386"/><use href="#g56" x="288" y="386"/><use href="#g32" x="312" y="386"/><use href="#g49" x="318" y="386"/><use href="#g36" x="324" y="386"/><use href="#g49" x="330" y="386"/><use href="#g35" x="336" y="386"/><use href="#g61" x="342" y="386"/><use href="#g57" x="373" y="386"/><use href="#g57" x="379" y="386"/><use href="#g36" x="385" y="386"/><use href="#g36" x="391" y="386"/><use href="#g36" x="397" y="386"/><use href="#g27" x="448" y="386"/><use href="#g28" x="460" y="386"/><use href="#g58" x="472" y="386"/><use href="#g59" x="568" y="386"/><use href="#g60" x="580" y="386"/><use href="#g33" x="8" y="402"/><use href="#g38" x="14" y="402"/><use href="#g33" x="45" y="402"/><use href="#g37" x="51" y="402"/><use href="#g33" x="57" y="402"/><use href="#g36" x="63" y="402"/><use href="#g38" x="69" y="402"/><use href="#g61" x="75" y="402"/><use href="#g34" x="81" y="402"/><use href="#g57" x="87" y="402"/><use href="#g35" x="93" y="402"/><use href="#g32" x="99" y="402"/><use href="#g40" x="123" y="402"/><use href="#g41" x="129" y="402"/><use href="#g42" x="135" y="402"/><use href="#g43" x="141" y="402"/><use href="#g44" x="147" y="402"/><use href="#g45" x="153" y="402"/><use href="#g46" x="159" y="402"/><use href="#g47" x="171" y="402"/><use href="#g48" x="177" y="402"/><use href="#g49" x="183" y="402"/><use href="#g50" x="195" y="402"/><use href="#g51" x="207" y="402"/><use href="#g52" x="219" y="402"/><use href="#g52" x="225" y="402"/><use href="#g53" x="252" y="402"/><use href="#g54" x="264" y="402"/><use href="#g55" x="276" y="402"/><use href="#g56" x="288" y="402"/><use href="#g32" x="312" y="402"/><use href="#g49" x="318" y="402"/><use href="#g36" x="324" y="402"/><use href="#g49" x="330" y="402"/><use href="#g35" x="336" y="402"/><use href="#g33" x="342" y="402"/><use href="#g57" x="373" y="402"/><use href="#g57" x="379" y="402"/><use href="#g36" x="385" y="402"/><use href="#g36" x="391" y="402"/><use href="#g36" x="397" y="402"/><use href="#g27" x="448" y="402"/><use href="#g28" x="460" y="402"/><use href="#g58" x="472" y="402"/><use href="#g59" x="568" y="402"/><use href="#g60" x="580" y="402"/><use href="#g33" x="8" y="418"/><use href="#g33" x="14" y="418"/><use href="#g33" x="45" y="418"/><use href="#g57" x="51" y="418"/><use href="#g36" x="57" y="418"/><use href="#g61" x="63" y="418"/><use href="#g36" x="69" y="418"/><use href="#g36" x="75" y="418"/><use href="#g57" x="81" y="418"/><use href="#g39" x="87" y="418"/><use href="#g34" x="93" y="418"/><use href="#g33" x="99" y="418"/><use href="#g40" x="123" y="418"/><use href="#g41" x="129" y="418"/><use href="#g42" x="135" y="418"/><use href="#g43" x="141" y="418"/><use href="#g44" x="147" y="418"/><use href="#g45" x="153" y="418"/><use href="#g46" x="159" y="418"/><use href="#g47" x="171" y="418"/><use href="#g48" x="177" y="418"/><use href="#g49" x="183" y="418"/><use href="#g50" x="195" y="418"/><use href="#g51" x="207" y="418"/><use href="#g52" x="219" y="418"/><use href="#g52" x="225" y="418"/><use href="#g53" x="252" y="418"/><use href="#g54" x="264" y="418"/><use href="#g55" x="276" y="418"/><use href="#g56" x="288" y="418"/><use href="#g32" x="312" y="418"/><use href="#g49" x="318" y="418"/><use href="#g36" x="324" y="418"/><use href="#g49" x="330" y="418"/><use href="#g35" x="336" y="418"/><use href="#g57" x="342" y="418"/><use href="#g57" x="373" y="418"/><use href="#g57" x="379" y="418"/><use href="#g36" x="385" y="418"/><use href="#g36" x="391" y="418"/><use href="#g36" x="397" y="418"/><use href="#g27" x="448" y="418"/><use href="#g28" x="460" y="418"/><use href="#g58" x="472" y="418"/><use href="#g59" x="568" y="418"/><use href="#g60" x="580" y="418"/><use href="#g33" x="8" y="434"/><use href="#g35" x="14" y="434"/><use href="#g33" x="45" y="434"/><use href="#g37" x="51" y="434"/><use href="#g57" x="57" y="434"/><use href="#g38" x="63" y="434"/><use href="#g36" x="69" y="434"/><use href="#g61" x="75" y="434"/><use href="#g36" x="81" y="434"/><use href="#g37" x="87" y="434"/><use href="#g36" x="93" y="434"/><use href="#g33" x="99" y="434"/><use href="#g40" x="123" y="434"/><use href="#g41" x="129" y="434"/><use href="#g42" x="135" y="434"/><use href="#g43" x="141" y="434"/><use href="#g44" x="147" y="434"/><use href="#g45" x="153" y="434"/><use href="#g46" x="159" y="434"/><use href="#g47" x="171" y="434"/><use href="#g48" x="177" y="434"/><use href="#g49" x="183" y="434"/><use href="#g50" x="195" y="434"/><use href="#g51" x="207" y="434"/><use href="#g52" x="219" y="434"/><use href="#g52" x="225" y="434"/><use href="#g53" x="252" y="434"/><use href="#g54" x="264" y="434"/><use href="#g55" x="276" y="434"/><use href="#g56" x="288" y="434"/><use href="#g32" x="312" y="434"/><use href="#g49" x="318" y="434"/><use href="#g36" x="324" y="434"/><use href="#g49" x="330" y="434"/><use href="#g35" x="336" y="434"/><use href="#g39" x="342" y="434"/><use href="#g57" x="373" y="434"/><use href="#g57" x="379" y="434"/><use href="#g36" x="385" y="434"/><use href="#g36" x="391" y="434"/><use href="#g36" x="397" y="434"/><use href="#g27" x="448" y="434"/><use href="#g28" x="460" y="434"/><use href="#g58" x="472" y="434"/><use href="#g59" x="568" y="434"/><use href="#g60" x="580" y="434"/><use href="#g33" x="8" y="450"/><use href="#g36" x="14" y="450"/><use href="#g33" x="45" y="450"/><use href="#g39" x="51" y="450"/><use href="#g33" x="57" y="450"/><use href="#g39" x="63" y="450"/><use href="#g61" x="69" y="450"/><use href="#g37" x="75" y="450"/><use href="#g35" x="81" y="450"/><use href="#g33" x="87" y="450"/><use href="#g37" x="93" y="450"/><use href="#g36" x="99" y="450"/><use href="#g40" x="123" y="450"/><use href="#g41" x="129" y="450"/><use href="#g42" x="135" y="450"/><use href="#g43" x="141" y="450"/><use href="#g44" x="147" y="450"/><use href="#g45" x="153" y="450"/><use href="#g46" x="159" y="450"/><use href="#g47" x="171" y="450"/><use href="#g48" x="177" y="450"/><use href="#g49" x="183" y="450"/><use href="#g50" x="195" y="450"/><use href="#g51" x="207" y="450"/><use href="#g52" x="219" y="450"/><use href="#g52" x="225" y="450"/><use href="#g53" x="252" y="450"/><use href="#g54" x="264" y="450"/><use href="#g55" x="276" y="450"/><use href="#g56" x="288" y="450"/><use href="#g32" x="312" y="450"/><use href="#g49" x="318" y="450"/><use href="#g36" x="324" y="450"/><use href="#g49" x="330" y="450"/><use href="#g35" x="336" y="450"/><use href="#g37" x="342" y="450"/><use href="#g57" x="373" y="450"/><use href="#g57" x="379" y="450"/><use href="#g36" x="385" y="450"/><use href="#g36" x="391" y="450"/><use href="#g36" x="397" y="450"/><use href="#g27" x="448" y="450"/><use href="#g28" x="460" y="450"/><use href="#g58" x="472" y="450"/><use href="#g59" x="568" y="450"/><use href="#g60" x="580" y="450"/><use href="#g33" x="8" y="466"/><use href="#g61" x="14" y="466"/><use href="#g33" x="45" y="466"/><use href="#g37" x="51" y="466"/><use href="#g36" x="57" y="466"/><use href="#g37" x="63" y="466"/><use href="#g38" x="69" y="466"/><use href="#g36" x="75" y="466"/><use href="#g34" x="81" y="466"/><use href="#g32" x="87" y="466"/><use href="#g35" x="93" y="466"/><use href="#g32" x="99" y="466"/><use href="#g40" x="123" y="466"/><use href="#g41" x="129" y="466"/><use href="#g42" x="135" y="466"/><use href="#g43" x="141" y="466"/><use href="#g44" x="147" y="466"/><use href="#g45" x="153" y="466"/><use href="#g46" x="159" y="466"/><use href="#g47" x="171" y="466"/><use href="#g48" x="177" y="466"/><use href="#g49" x="183" y="466"/><use href="#g50" x="195" y="466"/><use href="#g51" x="207" y="466"/><use href="#g52" x="219" y="466"/><use href="#g52" x="225" y="466"/><use href="#g53" x="252" y="466"/><use href="#g54" x="264" y="466"/><use href="#g55" x="276" y="466"/><use href="#g56" x="288" y="466"/><use href="#g32" x="312" y="466"/><use href="#g49" x="318" y="466"/><use href="#g36" x="324" y="466"/><use href="#g49" x="330" y="466"/><use href="#g35" x="336" y="466"/><use href="#g37" x="342" y="466"/><use href="#g57" x="373" y="466"/><use href="#g57" x="379" y="466"/><use href="#g36" x="385" y="466"/><use href="#g36" x="391" y="466"/><use href="#g36" x="397" y="466"/><use href="#g27" x="448" y="466"/><use href="#g28" x="460" y="466"/><use href="#g58" x="472" y="466"/><use href="#g59" x="568" y="466"/><use href="#g60" x="580" y="466"/><use href="#g33" x="8" y="482"/><use href="#g57" x="14" y="482"/><use href="#g33" x="45" y="482"/><use href="#g37" x="51" y="482"/><use href="#g35" x="57" y="482"/><use href="#g39" x="63" y="482"/><use href="#g33" x="69" y="482"/><use href="#g32" x="75" y="482"/><use href="#g34" x="81" y="482"/><use href="#g35" x="87" y="482"/><use href="#g35" x="93" y="482"/><use href="#g32" x="99" y="482"/><use href="#g40" x="123" y="482"/><use href="#g41" x="129" y="482"/><use href="#g42" x="135" y="482"/><use href="#g43" x="141" y="482"/><use href="#g44" x="147" y="482"/><use href="#g45" x="153" y="482"/><use href="#g46" x="159" y="482"/><use href="#g47" x="171" y="482"/><use href="#g48" x="177" y="482"/><use href="#g49" x="183" y="482"/><use href="#g50" x="195" y="482"/><use href="#g51" x="207" y="482"/><use href="#g52" x="219" y="482"/><use href="#g52" x="225" y="482"/><use href="#g53" x="252" y="482"/><use href="#g54" x="264" y="482"/><use href="#g55" x="276" y="482"/><use href="#g56" x="288" y="482"/><use href="#g32" x="312" y="482"/><use href="#g49" x="318" y="482"/><use href="#g36" x="324" y="482"/><use href="#g49" x="330" y="482"/><use href="#g35" x="336" y="482"/><use href="#g34" x="342" y="482"/><use href="#g57" x="373" y="482"/><use href="#g57" x="379" y="482"/><use href="#g36" x="385" y="482"/><use href="#g36" x="391" y="482"/><use href="#g36" x="397" y="482"/><use href="#g27" x="448" y="482"/><use href="#g28" x="460" y="482"/><use href="#g58" x="472" y="482"/><use href="#g59" x="568" y="482"/><use href="#g60" x="580" y="482"/><use href="#g33" x="8" y="498"/><use href="#g34" x="14" y="498"/><use href="#g33" x="45" y="498"/><use href="#g37" x="51" y="498"/><use href="#g32" x="57" y="498"/><use href="#g61" x="63" y="498"/><use href="#g61" x="69" y="498"/><use href="#g36" x="75" y="498"/><use href="#g38" x="81" y="498"/><use href="#g57" x="87" y="498"/><use href="#g37" x="93" y="498"/><use href="#g35" x="99" y="498"/><use href="#g40" x="123" y="498"/><use href="#g41" x="129" y="498"/><use href="#g42" x="135" y="498"/><use href="#g43" x="141" y="498"/><use href="#g44" x="147" y="498"/><use href="#g45" x="153" y="498"/><use href="#g46" x="159" y="498"/><use href="#g47" x="171" y="498"/><use href="#g48" x="177" y="498"/><use href="#g49" x="183" y="498"/><use href="#g50" x="195" y="498"/><use href="#g51" x="207" y="498"/><use href="#g52" x="219" y="498"/><use href="#g52" x="225" y="498"/><use href="#g53" x="252" y="498"/><use href="#g54" x="264" y="498"/><use href="#g55" x="276" y="498"/><use href="#g56" x="288" y="498"/><use href="#g32" x="312" y="498"/><use href="#g49" x="318" y="498"/><use href="#g36" x="324" y="498"/><use href="#g49" x="330" y="498"/><use href="#g35" x="336" y="498"/><use href="#g34" x="342" y="498"/><use href="#g57" x="373" y="498"/><use href="#g57" x="379" y="498"/><use href="#g36" x="385" y="498"/><use href="#g36" x="391" y="498"/><use href="#g36" x="397" y="498"/><use href="#g27" x="448" y="498"/><use href="#g28" x="460" y="498"/><use href="#g58" x="472" y="498"/><use href="#g59" x="568" y="498"/><use href="#g60" x="580" y="498"/><use href="#g33" x="8" y="514"/><use href="#g37" x="14" y="514"/><use href="#g33" x="45" y="514"/><use href="#g37" x="51" y="514"/><use href="#g36" x="57" y="514"/><use href="#g37" x="63" y="514"/><use href="#g38" x="69" y="514"/><use href="#g38" x="75" y="514"/><use href="#g37" x="81" y="514"/><use href="#g35" x="87" y="514"/><use href="#g33" x="93" y="514"/><use href="#g33" x="99" y="514"/><use href="#g40" x="123" y="514"/><use href="#g41" x="129" y="514"/><use href="#g42" x="135" y="514"/><use href="#g43" x="141" y="514"/><use href="#g44" x="147" y="514"/><use href="#g45" x="153" y="514"/><use href="#g46" x="159" y="514"/><use href="#g47" x="171" y="514"/><use href="#g48" x="177" y="514"/><use href="#g49" x="183" y="514"/><use href="#g50" x="195" y="514"/><use href="#g51" x="207" y="514"/><use href="#g52" x="219" y="514"/><use href="#g52" x="225" y="514"/><use href="#g53" x="252" y="514"/><use href="#g54" x="264" y="514"/><use href="#g55" x="276" y="514"/><use href="#g56" x="288" y="514"/><use href="#g32" x="312" y="514"/><use href="#g49" x="318" y="514"/><use href="#g36" x="324" y="514"/><use href="#g49" x="330" y="514"/><use href="#g35" x="336" y="514"/><use href="#g37" x="342" y="514"/><use href="#g57" x="373" y="514"/><use href="#g57" x="379" y="514"/><use href="#g36" x="385" y="514"/><use href="#g36" x="391" y="514"/><use href="#g36" x="397" y="514"/><use href="#g27" x="448" y="514"/><use href="#g28" x="460" y="514"/><use href="#g58" x="472" y="514"/><use href="#g59" x="568" y="514"/><use href="#g60" x="580" y="514"/><use href="#g33" x="8" y="530"/><use href="#g39" x="14" y="530"/><use href="#g33" x="45" y="530"/><use href="#g34" x="51" y="530"/><use href="#g33" x="57" y="530"/><use href="#g32" x="63" y="530"/><use href="#g36" x="69" y="530"/><use href="#g33" x="75" y="530"/><use href="#g38" x="81" y="530"/><use href="#g32" x="87" y="530"/><use href="#g34" x="93" y="530"/><use href="#g34" x="99" y="530"/><use href="#g40" x="123" y="530"/><use href="#g41" x="129" y="530"/><use href="#g42" x="135" y="530"/><use href="#g43" x="141" y="530"/><use href="#g44" x="147" y="530"/><use href="#g45" x="153" y="530"/><use href="#g46" x="159" y="530"/><use href="#g47" x="171" y="530"/><use href="#g48" x="177" y="530"/><use href="#g49" x="183" y="530"/><use href="#g50" x="195" y="530"/><use href="#g51" x="207" y="530"/><use href="#g52" x="219" y="530"/><use href="#g52" x="225" y="530"/><use href="#g53" x="252" y="530"/><use href="#g54" x="264" y="530"/><use href="#g55" x="276" y="530"/><use href="#g56" x="288" y="530"/><use href="#g32" x="312" y="530"/><use href="#g49" x="318" y="530"/><use href="#g36" x="324" y="530"/><use href="#g49" x="330" y="530"/><use href="#g35" x="336" y="530"/><use href="#g34" x="342" y="530"/><use href="#g57" x="373" y="530"/><use href="#g57" x="379" y="530"/><use href="#g36" x="385" y="530"/><use href="#g36" x="391" y="530"/><use href="#g36" x="397" y="530"/><use href="#g27" x="448" y="530"/><use href="#g28" x="460" y="530"/><use href="#g58" x="472" y="530"/><use href="#g59" x="568" y="530"/><use href="#g60" x="580" y="530"/><use href="#g35" x="8" y="546"/><use href="#g32" x="14" y="546"/><use href="#g33" x="45" y="546"/><use href="#g57" x="51" y="546"/><use href="#g32" x="57" y="546"/><use href="#g35" x="63" y="546"/><use href="#g33" x="69" y="546"/><use href="#g37" x="75" y="546"/><use href="#g36" x="81" y="546"/><use href="#g61" x="87" y="546"/><use href="#g39" x="93" y="546"/><use href="#g36" x="99" y="546"/><use href="#g40" x="123" y="546"/><use href="#g41" x="129" y="546"/><use href="#g42" x="135" y="546"/><use href="#g43" x="141" y="546"/><use href="#g44" x="147" y="546"/><use href="#g45" x="153" y="546"/><use href="#g46" x="159" y="546"/><use href="#g47" x="171" y="546"/><use href="#g48" x="177" y="546"/><use href="#g49" x="183" y="546"/><use href="#g50" x="195" y="546"/><use href="#g51" x="207" y="546"/><use href="#g52" x="219" y="546"/><use href="#g52" x="225" y="546"/><use href="#g53" x="252" y="546"/><use href="#g54" x="264" y="546"/><use href="#g55" x="276" y="546"/><use href="#g56" x="288" y="546"/><use href="#g32" x="312" y="546"/><use href="#g49" x="318" y="546"/><use href="#g36" x="324" y="546"/><use href="#g49" x="330" y="546"/><use href="#g35" x="336" y="546"/><use href="#g34" x="342" y="546"/><use href="#g57" x="373" y="546"/><use href="#g57" x="379" y="546"/><use href="#g36" x="385" y="546"/><use href="#g36" x="391" y="546"/><use href="#g36" x="397" y="546"/><use href="#g27" x="448" y="546"/><use href="#g28" x="460" y="546"/><use href="#g58" x="472" y="546"/><use href="#g59" x="568" y="546"/><use href="#g60" x="580" y="546"/><use href="#g35" x="8" y="562"/><use href="#g38" x="14" y="562"/><use href="#g33" x="45" y="562"/><use href="#g57" x="51" y="562"/><use href="#g36" x="57" y="562"/><use href="#g36" x="63" y="562"/><use href="#g61" x="69" y="562"/><use href="#g35" x="75" y="562"/><use href="#g38" x="81" y="562"/><use href="#g61" x="87" y="562"/><use href="#g35" x="93" y="562"/><use href="#g33" x="99" y="562"/><use href="#g40" x="123" y="562"/><use href="#g41" x="129" y="562"/><use href="#g42" x="135" y="562"/><use href="#g43" x="141" y="562"/><use href="#g44" x="147" y="562"/><use href="#g45" x="153" y="562"/><use href="#g46" x="159" y="562"/><use href="#g47" x="171" y="562"/><use href="#g48" x="177" y="562"/><use href="#g49" x="183" y="562"/><use href="#g50" x="195" y="562"/><use href="#g51" x="207" y="562"/><use href="#g52" x="219" y="562"/><use href="#g52" x="225" y="562"/><use href="#g53" x="252" y="562"/><use href="#g54" x="264" y="562"/><use href="#g55" x="276" y="562"/><use href="#g56" x="288" y="562"/><use href="#g32" x="312" y="562"/><use href="#g49" x="318" y="562"/><use href="#g36" x="324" y="562"/><use href="#g49" x="330" y="562"/><use href="#g35" x="336" y="562"/><use href="#g34" x="342" y="562"/><use href="#g57" x="373" y="562"/><use href="#g57" x="379" y="562"/><use href="#g36" x="385" y="562"/><use href="#g36" x="391" y="562"/><use href="#g36" x="397" y="562"/><use href="#g27" x="448" y="562"/><use href="#g28" x="460" y="562"/><use href="#g58" x="472" y="562"/><use href="#g59" x="568" y="562"/><use href="#g60" x="580" y="562"/><use href="#g35" x="8" y="578"/><use href="#g33" x="14" y="578"/><use href="#g33" x="45" y="578"/><use href="#g37" x="51" y="578"/><use href="#g36" x="57" y="578"/><use href="#g39" x="63" y="578"/><use href="#g34" x="69" y="578"/><use href="#g61" x="75" y="578"/><use href="#g35" x="81" y="578"/><use href="#g36" x="87" y="578"/><use href="#g33" x="93" y="578"/><use href="#g39" x="99" y="578"/><use href="#g40" x="123" y="578"/><use href="#g41" x="129" y="578"/><use href="#g42" x="135" y="578"/><use href="#g43" x="141" y="578"/><use href="#g44" x="147" y="578"/><use href="#g45" x="153" y="578"/><use href="#g46" x="159" y="578"/><use href="#g47" x="171" y="578"/><use href="#g48" x="177" y="578"/><use href="#g49" x="183" y="578"/><use href="#g50" x="195" y="578"/><use href="#g51" x="207" y="578"/><use href="#g52" x="219" y="578"/><use href="#g52" x="225" y="578"/><use href="#g53" x="252" y="578"/><use href="#g54" x="264" y="578"/><use href="#g55" x="276" y="578"/><use href="#g56" x="288" y="578"/><use href="#g32" x="312" y="578"/><use href="#g49" x="318" y="578"/><use href="#g36" x="324" y="578"/><use href="#g49" x="330" y="578"/><use href="#g35" x="336" y="578"/><use href="#g34" x="342" y="578"/><use href="#g57" x="373" y="578"/><use href="#g57" x="379" y="578"/><use href="#g36" x="385" y="578"/><use href="#g36" x="391" y="578"/><use href="#g36" x="397" y="578"/><use href="#g27" x="448" y="578"/><use href="#g28" x="460" y="578"/><use href="#g58" x="472" y="578"/><use href="#g59" x="568" y="578"/><use href="#g60" x="580" y="578"/><use href="#g35" x="8" y="594"/><use href="#g35" x="14" y="594"/><use href="#g33" x="45" y="594"/><use href="#g57" x="51" y="594"/><use href="#g33" x="57" y="594"/><use href="#g35" x="63" y="594"/><use href="#g57" x="69" y="594"/><use href="#g38" x="75" y="594"/><use href="#g34" x="81" y="594"/><use href="#g32" x="87" y="594"/><use href="#g38" x="93" y="594"/><use href="#g61" x="99" y="594"/><use href="#g40" x="123" y="594"/><use href="#g41" x="129" y="594"/><use href="#g42" x="135" y="594"/><use href="#g43" x="141" y="594"/><use href="#g44" x="147" y="594"/><use href="#g45" x="153" y="594"/><use href="#g46" x="159" y="594"/><use href="#g47" x="171" y="594"/><use href="#g48" x="177" y="594"/><use href="#g49" x="183" y="594"/><use href="#g50" x="195" y="594"/><use href="#g51" x="207" y="594"/><use href="#g52" x="219" y="594"/><use href="#g52" x="225" y="594"/><use href="#g53" x="252" y="594"/><use href="#g54" x="264" y="594"/><use href="#g55" x="276" y="594"/><use href="#g56" x="288" y="594"/><use href="#g32" x="312" y="594"/><use href="#g49" x="318" y="594"/><use href="#g36" x="324" y="594"/><use href="#g49" x="330" y="594"/><use href="#g35" x="336" y="594"/><use href="#g34" x="342" y="594"/><use href="#g57" x="373" y="594"/><use href="#g57" x="379" y="594"/><use href="#g36" x="385" y="594"/><use href="#g36" x="391" y="594"/><use href="#g36" x="397" y="594"/><use href="#g27" x="448" y="594"/><use href="#g28" x="460" y="594"/><use href="#g58" x="472" y="594"/><use href="#g59" x="568" y="594"/><use href="#g60" x="580" y="594"/><use href="#g35" x="8" y="610"/><use href="#g36" x="14" y="610"/><use href="#g33" x="45" y="610"/><use href="#g34" x="51" y="610"/><use href="#g61" x="57" y="610"/><use href="#g38" x="63" y="610"/><use href="#g35" x="69" y="610"/><use href="#g57" x="75" y="610"/><use href="#g33" x="81" y="610"/><use href="#g35" x="87" y="610"/><use href="#g33" x="93" y="610"/><use href="#g33" x="99" y="610"/><use href="#g40" x="123" y="610"/><use href="#g41" x="129" y="610"/><use href="#g42" x="135" y="610"/><use href="#g43" x="141" y="610"/><use href="#g44" x="147" y="610"/><use href="#g45" x="153" y="610"/><use href="#g46" x="159" y="610"/><use href="#g47" x="171" y="610"/><use href="#g48" x="177" y="610"/><use href="#g49" x="183" y="610"/><use href="#g50" x="195" y="610"/><use href="#g51" x="207" y="610"/><use href="#g52" x="219" y="610"/><use href="#g52" x="225" y="610"/><use href="#g53" x="252" y="610"/><use href="#g54" x="264" y="610"/><use href="#g55" x="276" y="610"/><use href="#g56" x="288" y="610"/><use href="#g32" x="312" y="610"/><use href="#g49" x="318" y="610"/><use href="#g36" x="324" y="610"/><use href="#g49" x="330" y="610"/><use href="#g35" x="336" y="610"/><use href="#g33" x="342" y="610"/><use href="#g57" x="373" y="610"/><use href="#g57" x="379" y="610"/><use href="#g36" x="385" y="610"/><use href="#g36" x="391" y="610"/><use href="#g36" x="397" y="610"/><use href="#g27" x="448" y="610"/><use href="#g28" x="460" y="610"/><use href="#g58" x="472" y="610"/><use href="#g59" x="568" y="610"/><use href="#g60" x="580" y="610"/><use href="#g35" x="8" y="626"/><use href="#g61" x="14" y="626"/><use href="#g33" x="45" y="626"/><use href="#g37" x="51" y="626"/><use href="#g36" x="57" y="626"/><use href="#g37" x="63" y="626"/><use href="#g34" x="69" y="626"/><use href="#g35" x="75" y="626"/><use href="#g35" x="81" y="626"/><use href="#g37" x="87" y="626"/><use href="#g39" x="93" y="626"/><use href="#g57" x="99" y="626"/><use href="#g40" x="123" y="626"/><use href="#g41" x="129" y="626"/><use href="#g42" x="135" y="626"/><use href="#g43" x="141" y="626"/><use href="#g44" x="147" y="626"/><use href="#g45" x="153" y="626"/><use href="#g46" x="159" y="626"/><use href="#g47" x="171" y="626"/><use href="#g48" x="177" y="626"/><use href="#g49" x="183" y="626"/><use href="#g50" x="195" y="626"/><use href="#g51" x="207" y="626"/><use href="#g52" x="219" y="626"/><use href="#g52" x="225" y="626"/><use href="#g53" x="252" y="626"/><use href="#g54" x="264" y="626"/><use href="#g55" x="276" y="626"/><use href="#g56" x="288" y="626"/><use href="#g32" x="312" y="626"/><use href="#g49" x="318" y="626"/><use href="#g36" x="324" y="626"/><use href="#g49" x="330" y="626"/><use href="#g35" x="336" y="626"/><use href="#g57" x="342" y="626"/><use href="#g57" x="373" y="626"/><use href="#g57" x="379" y="626"/><use href="#g36" x="385" y="626"/><use href="#g36" x="391" y="626"/><use href="#g36" x="397" y="626"/><use href="#g27" x="448" y="626"/><use href="#g28" x="460" y="626"/><use href="#g58" x="472" y="626"/><use href="#g59" x="568" y="626"/><use href="#g60" x="580" y="626"/><use href="#g35" x="8" y="642"/><use href="#g57" x="14" y="642"/><use href="#g33" x="45" y="642"/><use href="#g57" x="51" y="642"/><use href="#g36" x="57" y="642"/><use href="#g61" x="63" y="642"/><use href="#g32" x="69" y="642"/><use href="#g33" x="75" y="642"/><use href="#g39" x="81" y="642"/><use href="#g33" x="87" y="642"/><use href="#g57" x="93" y="642"/><use href="#g33" x="99" y="642"/><use href="#g40" x="123" y="642"/><use href="#g41" x="129" y="642"/><use href="#g42" x="135" y="642"/><use href="#g43" x="141" y="642"/><use href="#g44" x="147" y="642"/><use href="#g45" x="153" y="642"/><use href="#g46" x="159" y="642"/><use href="#g47" x="171" y="642"/><use href="#g48" x="177" y="642"/><use href="#g49" x="183" y="642"/><use href="#g50" x="195" y="642"/><use href="#g51" x="207" y="642"/><use href="#g52" x="219" y="642"/><use href="#g52" x="225" y="642"/><use href="#g53" x="252" y="642"/><use href="#g54" x="264" y="642"/><use href="#g55" x="276" y="642"/><use href="#g56" x="288" y="642"/><use href="#g32" x="312" y="642"/><use href="#g49" x="318" y="642"/><use href="#g36" x="324" y="642"/><use href="#g49" x="330" y="642"/><use href="#g35" x="336" y="642"/><use href="#g35" x="342" y="642"/><use href="#g57" x="373" y="642"/><use href="#g57" x="379" y="642"/><use href="#g36" x="385" y="642"/><use href="#g36" x="391" y="642"/><use href="#g36" x="397" y="642"/><use href="#g27" x="448" y="642"/><use href="#g28" x="460" y="642"/><use href="#g58" x="472" y="642"/><use href="#g59" x="568" y="642"/><use href="#g60" x="580" y="642"/><use href="#g35" x="8" y="658"/><use href="#g34" x="14" y="658"/><use href="#g33" x="45" y="658"/><use href="#g36" x="51" y="658"/><use href="#g32" x="57" y="658"/><use href="#g39" x="63" y="658"/><use href="#g33" x="69" y="658"/><use href="#g36" x="75" y="658"/><use href="#g39" x="81" y="658"/><use href="#g34" x="87" y="658"/><use href="#g38" x="93" y="658"/><use href="#g33" x="99" y="658"/><use href="#g40" x="123" y="658"/><use href="#g41" x="129" y="658"/><use href="#g42" x="135" y="658"/><use href="#g43" x="141" y="658"/><use href="#g44" x="147" y="658"/><use href="#g45" x="153" y="658"/><use href="#g46" x="159" y="658"/><use href="#g47" x="171" y="658"/><use href="#g48" x="177" y="658"/><use href="#g49" x="183" y="658"/><use href="#g50" x="195" y="658"/><use href="#g51" x="207" y="658"/><use href="#g52" x="219" y="658"/><use href="#g52" x="225" y="658"/><use href="#g53" x="252" y="658"/><use href="#g54" x="264" y="658"/><use href="#g55" x="276" y="658"/><use href="#g56" x="288" y="658"/><use href="#g32" x="312" y="658"/><use href="#g49" x="318" y="658"/><use href="#g36" x="324" y="658"/><use href="#g49" x="330" y="658"/><use href="#g35" x="336" y="658"/><use href="#g35" x="342" y="658"/><use href="#g57" x="373" y="658"/><use href="#g57" x="379" y="658"/><use href="#g36" x="385" y="658"/><use href="#g36" x="391" y="658"/><use href="#g36" x="397" y="658"/><use href="#g27" x="448" y="658"/><use href="#g28" x="460" y="658"/><use href="#g58" x="472" y="658"/><use href="#g59" x="568" y="658"/><use href="#g60" x="580" y="658"/></g></svg>
</body></html>
